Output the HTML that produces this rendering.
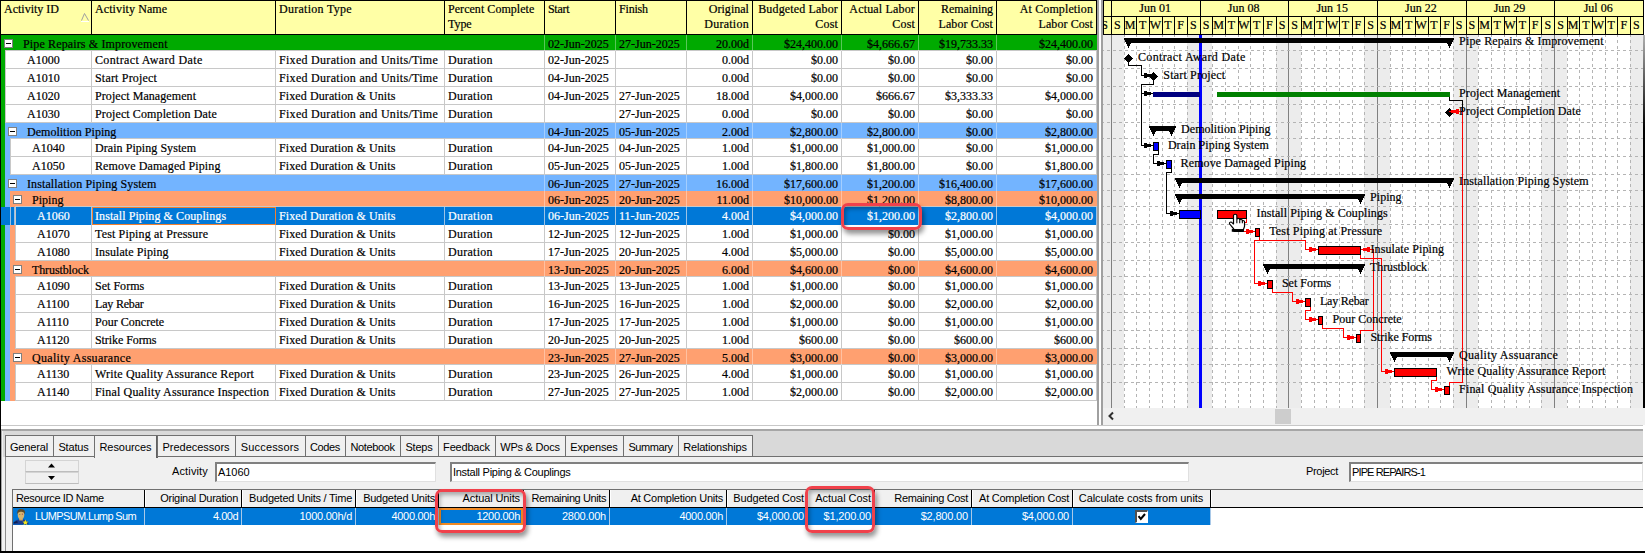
<!DOCTYPE html><html><head><meta charset="utf-8"><title>P6 Activities</title><style>

html,body{margin:0;padding:0;}
body{width:1645px;height:553px;overflow:hidden;background:#fff;position:relative;font-family:"Liberation Serif", serif;font-size:12px;color:#000;}
div,span{box-sizing:border-box;}
.a{position:absolute;}
.t{position:absolute;white-space:nowrap;line-height:14px;height:14px;letter-spacing:0.1px;-webkit-text-stroke:0.2px currentColor;}
svg text{stroke:#000;stroke-width:0.2px;}
.n{letter-spacing:0;}
.r{text-align:right;}
.hd{position:absolute;top:1px;height:33px;background:#ffffa6;border-right:1px solid #000;}
.hd .t{line-height:15px;height:auto;}
.w{color:#fff;}
.s{font-family:"Liberation Sans", sans-serif;font-size:12px;letter-spacing:0;}
.gl{position:absolute;white-space:nowrap;line-height:14px;height:14px;letter-spacing:0.22px;}

</style></head><body>
<div class="a" style="left:0;top:0;width:1097px;height:426px;background:#fff;"></div>
<div class="a" style="left:0;top:0;width:1097px;height:35px;background:#000;"></div>
<div class="a" style="left:1px;top:1px;width:90px;height:33px;background:#ffffa6;"></div>
<div class="t" style="left:4px;top:2px;line-height:15px;height:auto;"><span style="letter-spacing:0.0px;">Activity ID</span></div>
<div class="a" style="left:92px;top:1px;width:183px;height:33px;background:#ffffa6;"></div>
<div class="t" style="left:95px;top:2px;line-height:15px;height:auto;"><span style="letter-spacing:0.093px;">Activity Name</span></div>
<div class="a" style="left:276px;top:1px;width:168px;height:33px;background:#ffffa6;"></div>
<div class="t" style="left:279px;top:2px;line-height:15px;height:auto;"><span style="letter-spacing:0.278px;">Duration Type</span></div>
<div class="a" style="left:445px;top:1px;width:99px;height:33px;background:#ffffa6;"></div>
<div class="t" style="left:448px;top:2px;line-height:15px;height:auto;"><span style="letter-spacing:0.044px;">Percent Complete</span><br><span style="letter-spacing:-0.043px;">Type</span></div>
<div class="a" style="left:545px;top:1px;width:70px;height:33px;background:#ffffa6;"></div>
<div class="t" style="left:548px;top:2px;line-height:15px;height:auto;"><span style="letter-spacing:-0.3px;">Start</span></div>
<div class="a" style="left:616px;top:1px;width:70px;height:33px;background:#ffffa6;"></div>
<div class="t" style="left:619px;top:2px;line-height:15px;height:auto;"><span style="letter-spacing:-0.183px;">Finish</span></div>
<div class="a" style="left:687px;top:1px;width:65px;height:33px;background:#ffffa6;"></div>
<div class="t r" style="left:687px;width:62px;top:2px;line-height:15px;height:auto;"><span style="letter-spacing:0.029px;">Original</span><br><span style="letter-spacing:0.263px;">Duration</span></div>
<div class="a" style="left:753px;top:1px;width:88px;height:33px;background:#ffffa6;"></div>
<div class="t r" style="left:753px;width:85px;top:2px;line-height:15px;height:auto;"><span style="letter-spacing:0.157px;">Budgeted Labor</span><br><span style="letter-spacing:0.161px;">Cost</span></div>
<div class="a" style="left:842px;top:1px;width:76px;height:33px;background:#ffffa6;"></div>
<div class="t r" style="left:842px;width:73px;top:2px;line-height:15px;height:auto;"><span style="letter-spacing:0.169px;">Actual Labor</span><br><span style="letter-spacing:0.161px;">Cost</span></div>
<div class="a" style="left:919px;top:1px;width:77px;height:33px;background:#ffffa6;"></div>
<div class="t r" style="left:919px;width:74px;top:2px;line-height:15px;height:auto;"><span style="letter-spacing:-0.084px;">Remaining</span><br><span style="letter-spacing:0.081px;">Labor Cost</span></div>
<div class="a" style="left:997px;top:1px;width:99px;height:33px;background:#ffffa6;"></div>
<div class="t r" style="left:997px;width:96px;top:2px;line-height:15px;height:auto;"><span style="letter-spacing:0.119px;">At Completion</span><br><span style="letter-spacing:0.081px;">Labor Cost</span></div>
<svg class="a" style="left:80px;top:11px" width="10" height="11"><path d="M1.5 9.5 L4.5 2.5 L8.5 9.5" fill="none" stroke="#a0a0a0" stroke-width="1"/><path d="M1 10.5 H9" stroke="#fff" stroke-width="1"/></svg>
<div class="a" style="left:1px;top:35px;width:1096px;height:16px;background:#00aa00;"></div>
<div class="a" style="left:5px;top:50px;width:1092px;height:1px;background:#c8c8c8;"></div>
<div class="a" style="left:4px;top:39px;width:9px;height:9px;background:#fff;border:1px solid #808080;"></div>
<div class="a" style="left:6px;top:43px;width:5px;height:1px;background:#000;"></div>
<div class="t" style="left:23px;top:37px;letter-spacing:0.141px;">Pipe Repairs &amp; Improvement</div>
<div class="a" style="left:544px;top:35px;width:1px;height:16px;background:rgba(255,255,255,0.35);"></div>
<div class="a" style="left:615px;top:35px;width:1px;height:16px;background:rgba(255,255,255,0.35);"></div>
<div class="a" style="left:686px;top:35px;width:1px;height:16px;background:rgba(255,255,255,0.35);"></div>
<div class="a" style="left:752px;top:35px;width:1px;height:16px;background:rgba(255,255,255,0.35);"></div>
<div class="a" style="left:841px;top:35px;width:1px;height:16px;background:rgba(255,255,255,0.35);"></div>
<div class="a" style="left:918px;top:35px;width:1px;height:16px;background:rgba(255,255,255,0.35);"></div>
<div class="a" style="left:996px;top:35px;width:1px;height:16px;background:rgba(255,255,255,0.35);"></div>
<div class="t n" style="left:548px;top:37px;">02-Jun-2025</div>
<div class="t n" style="left:619px;top:37px;">27-Jun-2025</div>
<div class="t n r" style="left:687px;width:62px;top:37px;">20.00d</div>
<div class="t n r" style="left:753px;width:85px;top:37px;">$24,400.00</div>
<div class="t n r" style="left:842px;width:73px;top:37px;">$4,666.67</div>
<div class="t n r" style="left:919px;width:74px;top:37px;">$19,733.33</div>
<div class="t n r" style="left:997px;width:96px;top:37px;">$24,400.00</div>
<div class="a" style="left:1px;top:51px;width:4px;height:18px;background:#00aa00;"></div>
<div class="a" style="left:5px;top:51px;width:1092px;height:18px;background:#fff;border-bottom:1px solid #c8c8c8;"></div>
<div class="a" style="left:91px;top:51px;width:1px;height:18px;background:#c8c8c8;"></div>
<div class="a" style="left:275px;top:51px;width:1px;height:18px;background:#c8c8c8;"></div>
<div class="a" style="left:444px;top:51px;width:1px;height:18px;background:#c8c8c8;"></div>
<div class="a" style="left:544px;top:51px;width:1px;height:18px;background:#c8c8c8;"></div>
<div class="a" style="left:615px;top:51px;width:1px;height:18px;background:#c8c8c8;"></div>
<div class="a" style="left:686px;top:51px;width:1px;height:18px;background:#c8c8c8;"></div>
<div class="a" style="left:752px;top:51px;width:1px;height:18px;background:#c8c8c8;"></div>
<div class="a" style="left:841px;top:51px;width:1px;height:18px;background:#c8c8c8;"></div>
<div class="a" style="left:918px;top:51px;width:1px;height:18px;background:#c8c8c8;"></div>
<div class="a" style="left:996px;top:51px;width:1px;height:18px;background:#c8c8c8;"></div>
<div class="a" style="left:1096px;top:51px;width:1px;height:18px;background:#c8c8c8;"></div>
<div class="a" style="left:5px;top:51px;width:1px;height:18px;background:#c8c8c8;"></div>
<div class="t n" style="left:27px;top:53px;">A1000</div>
<div class="t" style="left:95px;top:53px;letter-spacing:0.357px;">Contract Award Date</div>
<div class="t" style="left:279px;top:53px;letter-spacing:0.294px;">Fixed Duration and Units/Time</div>
<div class="t" style="left:448px;top:53px;letter-spacing:0.263px;">Duration</div>
<div class="t n" style="left:548px;top:53px;">02-Jun-2025</div>
<div class="t n r" style="left:687px;width:62px;top:53px;">0.00d</div>
<div class="t n r" style="left:753px;width:85px;top:53px;">$0.00</div>
<div class="t n r" style="left:842px;width:73px;top:53px;">$0.00</div>
<div class="t n r" style="left:919px;width:74px;top:53px;">$0.00</div>
<div class="t n r" style="left:997px;width:96px;top:53px;">$0.00</div>
<div class="a" style="left:1px;top:69px;width:4px;height:18px;background:#00aa00;"></div>
<div class="a" style="left:5px;top:69px;width:1092px;height:18px;background:#fff;border-bottom:1px solid #c8c8c8;"></div>
<div class="a" style="left:91px;top:69px;width:1px;height:18px;background:#c8c8c8;"></div>
<div class="a" style="left:275px;top:69px;width:1px;height:18px;background:#c8c8c8;"></div>
<div class="a" style="left:444px;top:69px;width:1px;height:18px;background:#c8c8c8;"></div>
<div class="a" style="left:544px;top:69px;width:1px;height:18px;background:#c8c8c8;"></div>
<div class="a" style="left:615px;top:69px;width:1px;height:18px;background:#c8c8c8;"></div>
<div class="a" style="left:686px;top:69px;width:1px;height:18px;background:#c8c8c8;"></div>
<div class="a" style="left:752px;top:69px;width:1px;height:18px;background:#c8c8c8;"></div>
<div class="a" style="left:841px;top:69px;width:1px;height:18px;background:#c8c8c8;"></div>
<div class="a" style="left:918px;top:69px;width:1px;height:18px;background:#c8c8c8;"></div>
<div class="a" style="left:996px;top:69px;width:1px;height:18px;background:#c8c8c8;"></div>
<div class="a" style="left:1096px;top:69px;width:1px;height:18px;background:#c8c8c8;"></div>
<div class="a" style="left:5px;top:69px;width:1px;height:18px;background:#c8c8c8;"></div>
<div class="t n" style="left:27px;top:71px;">A1010</div>
<div class="t" style="left:95px;top:71px;letter-spacing:0.187px;">Start Project</div>
<div class="t" style="left:279px;top:71px;letter-spacing:0.294px;">Fixed Duration and Units/Time</div>
<div class="t" style="left:448px;top:71px;letter-spacing:0.263px;">Duration</div>
<div class="t n" style="left:548px;top:71px;">04-Jun-2025</div>
<div class="t n r" style="left:687px;width:62px;top:71px;">0.00d</div>
<div class="t n r" style="left:753px;width:85px;top:71px;">$0.00</div>
<div class="t n r" style="left:842px;width:73px;top:71px;">$0.00</div>
<div class="t n r" style="left:919px;width:74px;top:71px;">$0.00</div>
<div class="t n r" style="left:997px;width:96px;top:71px;">$0.00</div>
<div class="a" style="left:1px;top:87px;width:4px;height:18px;background:#00aa00;"></div>
<div class="a" style="left:5px;top:87px;width:1092px;height:18px;background:#fff;border-bottom:1px solid #c8c8c8;"></div>
<div class="a" style="left:91px;top:87px;width:1px;height:18px;background:#c8c8c8;"></div>
<div class="a" style="left:275px;top:87px;width:1px;height:18px;background:#c8c8c8;"></div>
<div class="a" style="left:444px;top:87px;width:1px;height:18px;background:#c8c8c8;"></div>
<div class="a" style="left:544px;top:87px;width:1px;height:18px;background:#c8c8c8;"></div>
<div class="a" style="left:615px;top:87px;width:1px;height:18px;background:#c8c8c8;"></div>
<div class="a" style="left:686px;top:87px;width:1px;height:18px;background:#c8c8c8;"></div>
<div class="a" style="left:752px;top:87px;width:1px;height:18px;background:#c8c8c8;"></div>
<div class="a" style="left:841px;top:87px;width:1px;height:18px;background:#c8c8c8;"></div>
<div class="a" style="left:918px;top:87px;width:1px;height:18px;background:#c8c8c8;"></div>
<div class="a" style="left:996px;top:87px;width:1px;height:18px;background:#c8c8c8;"></div>
<div class="a" style="left:1096px;top:87px;width:1px;height:18px;background:#c8c8c8;"></div>
<div class="a" style="left:5px;top:87px;width:1px;height:18px;background:#c8c8c8;"></div>
<div class="t n" style="left:27px;top:89px;">A1020</div>
<div class="t" style="left:95px;top:89px;letter-spacing:0.08px;">Project Management</div>
<div class="t" style="left:279px;top:89px;letter-spacing:0.099px;">Fixed Duration &amp; Units</div>
<div class="t" style="left:448px;top:89px;letter-spacing:0.263px;">Duration</div>
<div class="t n" style="left:548px;top:89px;">04-Jun-2025</div>
<div class="t n" style="left:619px;top:89px;">27-Jun-2025</div>
<div class="t n r" style="left:687px;width:62px;top:89px;">18.00d</div>
<div class="t n r" style="left:753px;width:85px;top:89px;">$4,000.00</div>
<div class="t n r" style="left:842px;width:73px;top:89px;">$666.67</div>
<div class="t n r" style="left:919px;width:74px;top:89px;">$3,333.33</div>
<div class="t n r" style="left:997px;width:96px;top:89px;">$4,000.00</div>
<div class="a" style="left:1px;top:105px;width:4px;height:18px;background:#00aa00;"></div>
<div class="a" style="left:5px;top:105px;width:1092px;height:18px;background:#fff;border-bottom:1px solid #c8c8c8;"></div>
<div class="a" style="left:91px;top:105px;width:1px;height:18px;background:#c8c8c8;"></div>
<div class="a" style="left:275px;top:105px;width:1px;height:18px;background:#c8c8c8;"></div>
<div class="a" style="left:444px;top:105px;width:1px;height:18px;background:#c8c8c8;"></div>
<div class="a" style="left:544px;top:105px;width:1px;height:18px;background:#c8c8c8;"></div>
<div class="a" style="left:615px;top:105px;width:1px;height:18px;background:#c8c8c8;"></div>
<div class="a" style="left:686px;top:105px;width:1px;height:18px;background:#c8c8c8;"></div>
<div class="a" style="left:752px;top:105px;width:1px;height:18px;background:#c8c8c8;"></div>
<div class="a" style="left:841px;top:105px;width:1px;height:18px;background:#c8c8c8;"></div>
<div class="a" style="left:918px;top:105px;width:1px;height:18px;background:#c8c8c8;"></div>
<div class="a" style="left:996px;top:105px;width:1px;height:18px;background:#c8c8c8;"></div>
<div class="a" style="left:1096px;top:105px;width:1px;height:18px;background:#c8c8c8;"></div>
<div class="a" style="left:5px;top:105px;width:1px;height:18px;background:#c8c8c8;"></div>
<div class="t n" style="left:27px;top:107px;">A1030</div>
<div class="t" style="left:95px;top:107px;letter-spacing:0.109px;">Project Completion Date</div>
<div class="t" style="left:279px;top:107px;letter-spacing:0.294px;">Fixed Duration and Units/Time</div>
<div class="t" style="left:448px;top:107px;letter-spacing:0.263px;">Duration</div>
<div class="t n" style="left:619px;top:107px;">27-Jun-2025</div>
<div class="t n r" style="left:687px;width:62px;top:107px;">0.00d</div>
<div class="t n r" style="left:753px;width:85px;top:107px;">$0.00</div>
<div class="t n r" style="left:842px;width:73px;top:107px;">$0.00</div>
<div class="t n r" style="left:919px;width:74px;top:107px;">$0.00</div>
<div class="t n r" style="left:997px;width:96px;top:107px;">$0.00</div>
<div class="a" style="left:1px;top:123px;width:4px;height:16px;background:#00aa00;"></div>
<div class="a" style="left:5px;top:123px;width:1092px;height:16px;background:#73b4ff;"></div>
<div class="a" style="left:10px;top:138px;width:1087px;height:1px;background:#c8c8c8;"></div>
<div class="a" style="left:8px;top:127px;width:9px;height:9px;background:#fff;border:1px solid #808080;"></div>
<div class="a" style="left:10px;top:131px;width:5px;height:1px;background:#000;"></div>
<div class="t" style="left:27px;top:125px;letter-spacing:0.018px;">Demolition Piping</div>
<div class="a" style="left:544px;top:123px;width:1px;height:16px;background:rgba(255,255,255,0.35);"></div>
<div class="a" style="left:615px;top:123px;width:1px;height:16px;background:rgba(255,255,255,0.35);"></div>
<div class="a" style="left:686px;top:123px;width:1px;height:16px;background:rgba(255,255,255,0.35);"></div>
<div class="a" style="left:752px;top:123px;width:1px;height:16px;background:rgba(255,255,255,0.35);"></div>
<div class="a" style="left:841px;top:123px;width:1px;height:16px;background:rgba(255,255,255,0.35);"></div>
<div class="a" style="left:918px;top:123px;width:1px;height:16px;background:rgba(255,255,255,0.35);"></div>
<div class="a" style="left:996px;top:123px;width:1px;height:16px;background:rgba(255,255,255,0.35);"></div>
<div class="t n" style="left:548px;top:125px;">04-Jun-2025</div>
<div class="t n" style="left:619px;top:125px;">05-Jun-2025</div>
<div class="t n r" style="left:687px;width:62px;top:125px;">2.00d</div>
<div class="t n r" style="left:753px;width:85px;top:125px;">$2,800.00</div>
<div class="t n r" style="left:842px;width:73px;top:125px;">$2,800.00</div>
<div class="t n r" style="left:919px;width:74px;top:125px;">$0.00</div>
<div class="t n r" style="left:997px;width:96px;top:125px;">$2,800.00</div>
<div class="a" style="left:1px;top:139px;width:4px;height:18px;background:#00aa00;"></div>
<div class="a" style="left:5px;top:139px;width:5px;height:18px;background:#73b4ff;"></div>
<div class="a" style="left:10px;top:139px;width:1087px;height:18px;background:#fff;border-bottom:1px solid #c8c8c8;"></div>
<div class="a" style="left:91px;top:139px;width:1px;height:18px;background:#c8c8c8;"></div>
<div class="a" style="left:275px;top:139px;width:1px;height:18px;background:#c8c8c8;"></div>
<div class="a" style="left:444px;top:139px;width:1px;height:18px;background:#c8c8c8;"></div>
<div class="a" style="left:544px;top:139px;width:1px;height:18px;background:#c8c8c8;"></div>
<div class="a" style="left:615px;top:139px;width:1px;height:18px;background:#c8c8c8;"></div>
<div class="a" style="left:686px;top:139px;width:1px;height:18px;background:#c8c8c8;"></div>
<div class="a" style="left:752px;top:139px;width:1px;height:18px;background:#c8c8c8;"></div>
<div class="a" style="left:841px;top:139px;width:1px;height:18px;background:#c8c8c8;"></div>
<div class="a" style="left:918px;top:139px;width:1px;height:18px;background:#c8c8c8;"></div>
<div class="a" style="left:996px;top:139px;width:1px;height:18px;background:#c8c8c8;"></div>
<div class="a" style="left:1096px;top:139px;width:1px;height:18px;background:#c8c8c8;"></div>
<div class="a" style="left:10px;top:139px;width:1px;height:18px;background:#c8c8c8;"></div>
<div class="t n" style="left:32px;top:141px;">A1040</div>
<div class="t" style="left:95px;top:141px;letter-spacing:0.055px;">Drain Piping System</div>
<div class="t" style="left:279px;top:141px;letter-spacing:0.099px;">Fixed Duration &amp; Units</div>
<div class="t" style="left:448px;top:141px;letter-spacing:0.263px;">Duration</div>
<div class="t n" style="left:548px;top:141px;">04-Jun-2025</div>
<div class="t n" style="left:619px;top:141px;">04-Jun-2025</div>
<div class="t n r" style="left:687px;width:62px;top:141px;">1.00d</div>
<div class="t n r" style="left:753px;width:85px;top:141px;">$1,000.00</div>
<div class="t n r" style="left:842px;width:73px;top:141px;">$1,000.00</div>
<div class="t n r" style="left:919px;width:74px;top:141px;">$0.00</div>
<div class="t n r" style="left:997px;width:96px;top:141px;">$1,000.00</div>
<div class="a" style="left:1px;top:157px;width:4px;height:18px;background:#00aa00;"></div>
<div class="a" style="left:5px;top:157px;width:5px;height:18px;background:#73b4ff;"></div>
<div class="a" style="left:10px;top:157px;width:1087px;height:18px;background:#fff;border-bottom:1px solid #c8c8c8;"></div>
<div class="a" style="left:91px;top:157px;width:1px;height:18px;background:#c8c8c8;"></div>
<div class="a" style="left:275px;top:157px;width:1px;height:18px;background:#c8c8c8;"></div>
<div class="a" style="left:444px;top:157px;width:1px;height:18px;background:#c8c8c8;"></div>
<div class="a" style="left:544px;top:157px;width:1px;height:18px;background:#c8c8c8;"></div>
<div class="a" style="left:615px;top:157px;width:1px;height:18px;background:#c8c8c8;"></div>
<div class="a" style="left:686px;top:157px;width:1px;height:18px;background:#c8c8c8;"></div>
<div class="a" style="left:752px;top:157px;width:1px;height:18px;background:#c8c8c8;"></div>
<div class="a" style="left:841px;top:157px;width:1px;height:18px;background:#c8c8c8;"></div>
<div class="a" style="left:918px;top:157px;width:1px;height:18px;background:#c8c8c8;"></div>
<div class="a" style="left:996px;top:157px;width:1px;height:18px;background:#c8c8c8;"></div>
<div class="a" style="left:1096px;top:157px;width:1px;height:18px;background:#c8c8c8;"></div>
<div class="a" style="left:10px;top:157px;width:1px;height:18px;background:#c8c8c8;"></div>
<div class="t n" style="left:32px;top:159px;">A1050</div>
<div class="t" style="left:95px;top:159px;letter-spacing:0.104px;">Remove Damaged Piping</div>
<div class="t" style="left:279px;top:159px;letter-spacing:0.099px;">Fixed Duration &amp; Units</div>
<div class="t" style="left:448px;top:159px;letter-spacing:0.263px;">Duration</div>
<div class="t n" style="left:548px;top:159px;">05-Jun-2025</div>
<div class="t n" style="left:619px;top:159px;">05-Jun-2025</div>
<div class="t n r" style="left:687px;width:62px;top:159px;">1.00d</div>
<div class="t n r" style="left:753px;width:85px;top:159px;">$1,800.00</div>
<div class="t n r" style="left:842px;width:73px;top:159px;">$1,800.00</div>
<div class="t n r" style="left:919px;width:74px;top:159px;">$0.00</div>
<div class="t n r" style="left:997px;width:96px;top:159px;">$1,800.00</div>
<div class="a" style="left:1px;top:175px;width:4px;height:16px;background:#00aa00;"></div>
<div class="a" style="left:5px;top:175px;width:1092px;height:16px;background:#73b4ff;"></div>
<div class="a" style="left:8px;top:179px;width:9px;height:9px;background:#fff;border:1px solid #808080;"></div>
<div class="a" style="left:10px;top:183px;width:5px;height:1px;background:#000;"></div>
<div class="t" style="left:27px;top:177px;letter-spacing:0.109px;">Installation Piping System</div>
<div class="a" style="left:544px;top:175px;width:1px;height:16px;background:rgba(255,255,255,0.35);"></div>
<div class="a" style="left:615px;top:175px;width:1px;height:16px;background:rgba(255,255,255,0.35);"></div>
<div class="a" style="left:686px;top:175px;width:1px;height:16px;background:rgba(255,255,255,0.35);"></div>
<div class="a" style="left:752px;top:175px;width:1px;height:16px;background:rgba(255,255,255,0.35);"></div>
<div class="a" style="left:841px;top:175px;width:1px;height:16px;background:rgba(255,255,255,0.35);"></div>
<div class="a" style="left:918px;top:175px;width:1px;height:16px;background:rgba(255,255,255,0.35);"></div>
<div class="a" style="left:996px;top:175px;width:1px;height:16px;background:rgba(255,255,255,0.35);"></div>
<div class="t n" style="left:548px;top:177px;">06-Jun-2025</div>
<div class="t n" style="left:619px;top:177px;">27-Jun-2025</div>
<div class="t n r" style="left:687px;width:62px;top:177px;">16.00d</div>
<div class="t n r" style="left:753px;width:85px;top:177px;">$17,600.00</div>
<div class="t n r" style="left:842px;width:73px;top:177px;">$1,200.00</div>
<div class="t n r" style="left:919px;width:74px;top:177px;">$16,400.00</div>
<div class="t n r" style="left:997px;width:96px;top:177px;">$17,600.00</div>
<div class="a" style="left:1px;top:191px;width:4px;height:16px;background:#00aa00;"></div>
<div class="a" style="left:5px;top:191px;width:5px;height:16px;background:#73b4ff;"></div>
<div class="a" style="left:10px;top:191px;width:1087px;height:16px;background:#ffa070;"></div>
<div class="a" style="left:15px;top:206px;width:1082px;height:1px;background:#c8c8c8;"></div>
<div class="a" style="left:13px;top:195px;width:9px;height:9px;background:#fff;border:1px solid #808080;"></div>
<div class="a" style="left:15px;top:199px;width:5px;height:1px;background:#000;"></div>
<div class="t" style="left:32px;top:193px;letter-spacing:0.011px;">Piping</div>
<div class="a" style="left:544px;top:191px;width:1px;height:16px;background:rgba(255,255,255,0.35);"></div>
<div class="a" style="left:615px;top:191px;width:1px;height:16px;background:rgba(255,255,255,0.35);"></div>
<div class="a" style="left:686px;top:191px;width:1px;height:16px;background:rgba(255,255,255,0.35);"></div>
<div class="a" style="left:752px;top:191px;width:1px;height:16px;background:rgba(255,255,255,0.35);"></div>
<div class="a" style="left:841px;top:191px;width:1px;height:16px;background:rgba(255,255,255,0.35);"></div>
<div class="a" style="left:918px;top:191px;width:1px;height:16px;background:rgba(255,255,255,0.35);"></div>
<div class="a" style="left:996px;top:191px;width:1px;height:16px;background:rgba(255,255,255,0.35);"></div>
<div class="t n" style="left:548px;top:193px;">06-Jun-2025</div>
<div class="t n" style="left:619px;top:193px;">20-Jun-2025</div>
<div class="t n r" style="left:687px;width:62px;top:193px;">11.00d</div>
<div class="t n r" style="left:753px;width:85px;top:193px;">$10,000.00</div>
<div class="t n r" style="left:842px;width:73px;top:193px;">$1,200.00</div>
<div class="t n r" style="left:919px;width:74px;top:193px;">$8,800.00</div>
<div class="t n r" style="left:997px;width:96px;top:193px;">$10,000.00</div>
<div class="a" style="left:1px;top:207px;width:4px;height:18px;background:#0078d7;"></div>
<div class="a" style="left:5px;top:207px;width:5px;height:18px;background:#0078d7;"></div>
<div class="a" style="left:10px;top:207px;width:5px;height:18px;background:#0078d7;"></div>
<div class="a" style="left:15px;top:207px;width:1082px;height:18px;background:#0078d7;border-bottom:1px solid #0078d7;"></div>
<div class="a" style="left:91px;top:207px;width:1px;height:18px;background:#9cc3e6;"></div>
<div class="a" style="left:275px;top:207px;width:1px;height:18px;background:#9cc3e6;"></div>
<div class="a" style="left:444px;top:207px;width:1px;height:18px;background:#9cc3e6;"></div>
<div class="a" style="left:544px;top:207px;width:1px;height:18px;background:#9cc3e6;"></div>
<div class="a" style="left:615px;top:207px;width:1px;height:18px;background:#9cc3e6;"></div>
<div class="a" style="left:686px;top:207px;width:1px;height:18px;background:#9cc3e6;"></div>
<div class="a" style="left:752px;top:207px;width:1px;height:18px;background:#9cc3e6;"></div>
<div class="a" style="left:841px;top:207px;width:1px;height:18px;background:#9cc3e6;"></div>
<div class="a" style="left:918px;top:207px;width:1px;height:18px;background:#9cc3e6;"></div>
<div class="a" style="left:996px;top:207px;width:1px;height:18px;background:#9cc3e6;"></div>
<div class="a" style="left:1096px;top:207px;width:1px;height:18px;background:#9cc3e6;"></div>
<div class="a" style="left:15px;top:207px;width:1px;height:18px;background:#c8c8c8;"></div>
<div class="t w n" style="left:37px;top:209px;">A1060</div>
<div class="t w" style="left:95px;top:209px;letter-spacing:0.083px;">Install Piping &amp; Couplings</div>
<div class="t w" style="left:279px;top:209px;letter-spacing:0.099px;">Fixed Duration &amp; Units</div>
<div class="t w" style="left:448px;top:209px;letter-spacing:0.263px;">Duration</div>
<div class="t w n" style="left:548px;top:209px;">06-Jun-2025</div>
<div class="t w n" style="left:619px;top:209px;">11-Jun-2025</div>
<div class="t w n r" style="left:687px;width:62px;top:209px;">4.00d</div>
<div class="t w n r" style="left:753px;width:85px;top:209px;">$4,000.00</div>
<div class="t w n r" style="left:842px;width:73px;top:209px;">$1,200.00</div>
<div class="t w n r" style="left:919px;width:74px;top:209px;">$2,800.00</div>
<div class="t w n r" style="left:997px;width:96px;top:209px;">$4,000.00</div>
<div class="a" style="left:10px;top:207px;width:1px;height:18px;background:#9cc3e6;"></div>
<div class="a" style="left:14px;top:207px;width:1px;height:18px;background:#9cc3e6;"></div>
<div class="a" style="left:92px;top:207px;width:184px;height:18px;border:1px solid #f08030;"></div>
<div class="a" style="left:1px;top:225px;width:4px;height:18px;background:#00aa00;"></div>
<div class="a" style="left:5px;top:225px;width:5px;height:18px;background:#73b4ff;"></div>
<div class="a" style="left:10px;top:225px;width:5px;height:18px;background:#ffa070;"></div>
<div class="a" style="left:15px;top:225px;width:1082px;height:18px;background:#fff;border-bottom:1px solid #c8c8c8;"></div>
<div class="a" style="left:91px;top:225px;width:1px;height:18px;background:#c8c8c8;"></div>
<div class="a" style="left:275px;top:225px;width:1px;height:18px;background:#c8c8c8;"></div>
<div class="a" style="left:444px;top:225px;width:1px;height:18px;background:#c8c8c8;"></div>
<div class="a" style="left:544px;top:225px;width:1px;height:18px;background:#c8c8c8;"></div>
<div class="a" style="left:615px;top:225px;width:1px;height:18px;background:#c8c8c8;"></div>
<div class="a" style="left:686px;top:225px;width:1px;height:18px;background:#c8c8c8;"></div>
<div class="a" style="left:752px;top:225px;width:1px;height:18px;background:#c8c8c8;"></div>
<div class="a" style="left:841px;top:225px;width:1px;height:18px;background:#c8c8c8;"></div>
<div class="a" style="left:918px;top:225px;width:1px;height:18px;background:#c8c8c8;"></div>
<div class="a" style="left:996px;top:225px;width:1px;height:18px;background:#c8c8c8;"></div>
<div class="a" style="left:1096px;top:225px;width:1px;height:18px;background:#c8c8c8;"></div>
<div class="a" style="left:15px;top:225px;width:1px;height:18px;background:#c8c8c8;"></div>
<div class="t n" style="left:37px;top:227px;">A1070</div>
<div class="t" style="left:95px;top:227px;letter-spacing:0.16px;">Test Piping at Pressure</div>
<div class="t" style="left:279px;top:227px;letter-spacing:0.099px;">Fixed Duration &amp; Units</div>
<div class="t" style="left:448px;top:227px;letter-spacing:0.263px;">Duration</div>
<div class="t n" style="left:548px;top:227px;">12-Jun-2025</div>
<div class="t n" style="left:619px;top:227px;">12-Jun-2025</div>
<div class="t n r" style="left:687px;width:62px;top:227px;">1.00d</div>
<div class="t n r" style="left:753px;width:85px;top:227px;">$1,000.00</div>
<div class="t n r" style="left:842px;width:73px;top:227px;">$0.00</div>
<div class="t n r" style="left:919px;width:74px;top:227px;">$1,000.00</div>
<div class="t n r" style="left:997px;width:96px;top:227px;">$1,000.00</div>
<div class="a" style="left:1px;top:243px;width:4px;height:18px;background:#00aa00;"></div>
<div class="a" style="left:5px;top:243px;width:5px;height:18px;background:#73b4ff;"></div>
<div class="a" style="left:10px;top:243px;width:5px;height:18px;background:#ffa070;"></div>
<div class="a" style="left:15px;top:243px;width:1082px;height:18px;background:#fff;border-bottom:1px solid #c8c8c8;"></div>
<div class="a" style="left:91px;top:243px;width:1px;height:18px;background:#c8c8c8;"></div>
<div class="a" style="left:275px;top:243px;width:1px;height:18px;background:#c8c8c8;"></div>
<div class="a" style="left:444px;top:243px;width:1px;height:18px;background:#c8c8c8;"></div>
<div class="a" style="left:544px;top:243px;width:1px;height:18px;background:#c8c8c8;"></div>
<div class="a" style="left:615px;top:243px;width:1px;height:18px;background:#c8c8c8;"></div>
<div class="a" style="left:686px;top:243px;width:1px;height:18px;background:#c8c8c8;"></div>
<div class="a" style="left:752px;top:243px;width:1px;height:18px;background:#c8c8c8;"></div>
<div class="a" style="left:841px;top:243px;width:1px;height:18px;background:#c8c8c8;"></div>
<div class="a" style="left:918px;top:243px;width:1px;height:18px;background:#c8c8c8;"></div>
<div class="a" style="left:996px;top:243px;width:1px;height:18px;background:#c8c8c8;"></div>
<div class="a" style="left:1096px;top:243px;width:1px;height:18px;background:#c8c8c8;"></div>
<div class="a" style="left:15px;top:243px;width:1px;height:18px;background:#c8c8c8;"></div>
<div class="t n" style="left:37px;top:245px;">A1080</div>
<div class="t" style="left:95px;top:245px;letter-spacing:0.091px;">Insulate Piping</div>
<div class="t" style="left:279px;top:245px;letter-spacing:0.099px;">Fixed Duration &amp; Units</div>
<div class="t" style="left:448px;top:245px;letter-spacing:0.263px;">Duration</div>
<div class="t n" style="left:548px;top:245px;">17-Jun-2025</div>
<div class="t n" style="left:619px;top:245px;">20-Jun-2025</div>
<div class="t n r" style="left:687px;width:62px;top:245px;">4.00d</div>
<div class="t n r" style="left:753px;width:85px;top:245px;">$5,000.00</div>
<div class="t n r" style="left:842px;width:73px;top:245px;">$0.00</div>
<div class="t n r" style="left:919px;width:74px;top:245px;">$5,000.00</div>
<div class="t n r" style="left:997px;width:96px;top:245px;">$5,000.00</div>
<div class="a" style="left:1px;top:261px;width:4px;height:16px;background:#00aa00;"></div>
<div class="a" style="left:5px;top:261px;width:5px;height:16px;background:#73b4ff;"></div>
<div class="a" style="left:10px;top:261px;width:1087px;height:16px;background:#ffa070;"></div>
<div class="a" style="left:15px;top:276px;width:1082px;height:1px;background:#c8c8c8;"></div>
<div class="a" style="left:13px;top:265px;width:9px;height:9px;background:#fff;border:1px solid #808080;"></div>
<div class="a" style="left:15px;top:269px;width:5px;height:1px;background:#000;"></div>
<div class="t" style="left:32px;top:263px;letter-spacing:-0.11px;">Thrustblock</div>
<div class="a" style="left:544px;top:261px;width:1px;height:16px;background:rgba(255,255,255,0.35);"></div>
<div class="a" style="left:615px;top:261px;width:1px;height:16px;background:rgba(255,255,255,0.35);"></div>
<div class="a" style="left:686px;top:261px;width:1px;height:16px;background:rgba(255,255,255,0.35);"></div>
<div class="a" style="left:752px;top:261px;width:1px;height:16px;background:rgba(255,255,255,0.35);"></div>
<div class="a" style="left:841px;top:261px;width:1px;height:16px;background:rgba(255,255,255,0.35);"></div>
<div class="a" style="left:918px;top:261px;width:1px;height:16px;background:rgba(255,255,255,0.35);"></div>
<div class="a" style="left:996px;top:261px;width:1px;height:16px;background:rgba(255,255,255,0.35);"></div>
<div class="t n" style="left:548px;top:263px;">13-Jun-2025</div>
<div class="t n" style="left:619px;top:263px;">20-Jun-2025</div>
<div class="t n r" style="left:687px;width:62px;top:263px;">6.00d</div>
<div class="t n r" style="left:753px;width:85px;top:263px;">$4,600.00</div>
<div class="t n r" style="left:842px;width:73px;top:263px;">$0.00</div>
<div class="t n r" style="left:919px;width:74px;top:263px;">$4,600.00</div>
<div class="t n r" style="left:997px;width:96px;top:263px;">$4,600.00</div>
<div class="a" style="left:1px;top:277px;width:4px;height:18px;background:#00aa00;"></div>
<div class="a" style="left:5px;top:277px;width:5px;height:18px;background:#73b4ff;"></div>
<div class="a" style="left:10px;top:277px;width:5px;height:18px;background:#ffa070;"></div>
<div class="a" style="left:15px;top:277px;width:1082px;height:18px;background:#fff;border-bottom:1px solid #c8c8c8;"></div>
<div class="a" style="left:91px;top:277px;width:1px;height:18px;background:#c8c8c8;"></div>
<div class="a" style="left:275px;top:277px;width:1px;height:18px;background:#c8c8c8;"></div>
<div class="a" style="left:444px;top:277px;width:1px;height:18px;background:#c8c8c8;"></div>
<div class="a" style="left:544px;top:277px;width:1px;height:18px;background:#c8c8c8;"></div>
<div class="a" style="left:615px;top:277px;width:1px;height:18px;background:#c8c8c8;"></div>
<div class="a" style="left:686px;top:277px;width:1px;height:18px;background:#c8c8c8;"></div>
<div class="a" style="left:752px;top:277px;width:1px;height:18px;background:#c8c8c8;"></div>
<div class="a" style="left:841px;top:277px;width:1px;height:18px;background:#c8c8c8;"></div>
<div class="a" style="left:918px;top:277px;width:1px;height:18px;background:#c8c8c8;"></div>
<div class="a" style="left:996px;top:277px;width:1px;height:18px;background:#c8c8c8;"></div>
<div class="a" style="left:1096px;top:277px;width:1px;height:18px;background:#c8c8c8;"></div>
<div class="a" style="left:15px;top:277px;width:1px;height:18px;background:#c8c8c8;"></div>
<div class="t n" style="left:37px;top:279px;">A1090</div>
<div class="t" style="left:95px;top:279px;letter-spacing:0.023px;">Set Forms</div>
<div class="t" style="left:279px;top:279px;letter-spacing:0.099px;">Fixed Duration &amp; Units</div>
<div class="t" style="left:448px;top:279px;letter-spacing:0.263px;">Duration</div>
<div class="t n" style="left:548px;top:279px;">13-Jun-2025</div>
<div class="t n" style="left:619px;top:279px;">13-Jun-2025</div>
<div class="t n r" style="left:687px;width:62px;top:279px;">1.00d</div>
<div class="t n r" style="left:753px;width:85px;top:279px;">$1,000.00</div>
<div class="t n r" style="left:842px;width:73px;top:279px;">$0.00</div>
<div class="t n r" style="left:919px;width:74px;top:279px;">$1,000.00</div>
<div class="t n r" style="left:997px;width:96px;top:279px;">$1,000.00</div>
<div class="a" style="left:1px;top:295px;width:4px;height:18px;background:#00aa00;"></div>
<div class="a" style="left:5px;top:295px;width:5px;height:18px;background:#73b4ff;"></div>
<div class="a" style="left:10px;top:295px;width:5px;height:18px;background:#ffa070;"></div>
<div class="a" style="left:15px;top:295px;width:1082px;height:18px;background:#fff;border-bottom:1px solid #c8c8c8;"></div>
<div class="a" style="left:91px;top:295px;width:1px;height:18px;background:#c8c8c8;"></div>
<div class="a" style="left:275px;top:295px;width:1px;height:18px;background:#c8c8c8;"></div>
<div class="a" style="left:444px;top:295px;width:1px;height:18px;background:#c8c8c8;"></div>
<div class="a" style="left:544px;top:295px;width:1px;height:18px;background:#c8c8c8;"></div>
<div class="a" style="left:615px;top:295px;width:1px;height:18px;background:#c8c8c8;"></div>
<div class="a" style="left:686px;top:295px;width:1px;height:18px;background:#c8c8c8;"></div>
<div class="a" style="left:752px;top:295px;width:1px;height:18px;background:#c8c8c8;"></div>
<div class="a" style="left:841px;top:295px;width:1px;height:18px;background:#c8c8c8;"></div>
<div class="a" style="left:918px;top:295px;width:1px;height:18px;background:#c8c8c8;"></div>
<div class="a" style="left:996px;top:295px;width:1px;height:18px;background:#c8c8c8;"></div>
<div class="a" style="left:1096px;top:295px;width:1px;height:18px;background:#c8c8c8;"></div>
<div class="a" style="left:15px;top:295px;width:1px;height:18px;background:#c8c8c8;"></div>
<div class="t n" style="left:37px;top:297px;">A1100</div>
<div class="t" style="left:95px;top:297px;letter-spacing:-0.189px;">Lay Rebar</div>
<div class="t" style="left:279px;top:297px;letter-spacing:0.099px;">Fixed Duration &amp; Units</div>
<div class="t" style="left:448px;top:297px;letter-spacing:0.263px;">Duration</div>
<div class="t n" style="left:548px;top:297px;">16-Jun-2025</div>
<div class="t n" style="left:619px;top:297px;">16-Jun-2025</div>
<div class="t n r" style="left:687px;width:62px;top:297px;">1.00d</div>
<div class="t n r" style="left:753px;width:85px;top:297px;">$2,000.00</div>
<div class="t n r" style="left:842px;width:73px;top:297px;">$0.00</div>
<div class="t n r" style="left:919px;width:74px;top:297px;">$2,000.00</div>
<div class="t n r" style="left:997px;width:96px;top:297px;">$2,000.00</div>
<div class="a" style="left:1px;top:313px;width:4px;height:18px;background:#00aa00;"></div>
<div class="a" style="left:5px;top:313px;width:5px;height:18px;background:#73b4ff;"></div>
<div class="a" style="left:10px;top:313px;width:5px;height:18px;background:#ffa070;"></div>
<div class="a" style="left:15px;top:313px;width:1082px;height:18px;background:#fff;border-bottom:1px solid #c8c8c8;"></div>
<div class="a" style="left:91px;top:313px;width:1px;height:18px;background:#c8c8c8;"></div>
<div class="a" style="left:275px;top:313px;width:1px;height:18px;background:#c8c8c8;"></div>
<div class="a" style="left:444px;top:313px;width:1px;height:18px;background:#c8c8c8;"></div>
<div class="a" style="left:544px;top:313px;width:1px;height:18px;background:#c8c8c8;"></div>
<div class="a" style="left:615px;top:313px;width:1px;height:18px;background:#c8c8c8;"></div>
<div class="a" style="left:686px;top:313px;width:1px;height:18px;background:#c8c8c8;"></div>
<div class="a" style="left:752px;top:313px;width:1px;height:18px;background:#c8c8c8;"></div>
<div class="a" style="left:841px;top:313px;width:1px;height:18px;background:#c8c8c8;"></div>
<div class="a" style="left:918px;top:313px;width:1px;height:18px;background:#c8c8c8;"></div>
<div class="a" style="left:996px;top:313px;width:1px;height:18px;background:#c8c8c8;"></div>
<div class="a" style="left:1096px;top:313px;width:1px;height:18px;background:#c8c8c8;"></div>
<div class="a" style="left:15px;top:313px;width:1px;height:18px;background:#c8c8c8;"></div>
<div class="t n" style="left:37px;top:315px;">A1110</div>
<div class="t" style="left:95px;top:315px;letter-spacing:0.018px;">Pour Concrete</div>
<div class="t" style="left:279px;top:315px;letter-spacing:0.099px;">Fixed Duration &amp; Units</div>
<div class="t" style="left:448px;top:315px;letter-spacing:0.263px;">Duration</div>
<div class="t n" style="left:548px;top:315px;">17-Jun-2025</div>
<div class="t n" style="left:619px;top:315px;">17-Jun-2025</div>
<div class="t n r" style="left:687px;width:62px;top:315px;">1.00d</div>
<div class="t n r" style="left:753px;width:85px;top:315px;">$1,000.00</div>
<div class="t n r" style="left:842px;width:73px;top:315px;">$0.00</div>
<div class="t n r" style="left:919px;width:74px;top:315px;">$1,000.00</div>
<div class="t n r" style="left:997px;width:96px;top:315px;">$1,000.00</div>
<div class="a" style="left:1px;top:331px;width:4px;height:18px;background:#00aa00;"></div>
<div class="a" style="left:5px;top:331px;width:5px;height:18px;background:#73b4ff;"></div>
<div class="a" style="left:10px;top:331px;width:5px;height:18px;background:#ffa070;"></div>
<div class="a" style="left:15px;top:331px;width:1082px;height:18px;background:#fff;border-bottom:1px solid #c8c8c8;"></div>
<div class="a" style="left:91px;top:331px;width:1px;height:18px;background:#c8c8c8;"></div>
<div class="a" style="left:275px;top:331px;width:1px;height:18px;background:#c8c8c8;"></div>
<div class="a" style="left:444px;top:331px;width:1px;height:18px;background:#c8c8c8;"></div>
<div class="a" style="left:544px;top:331px;width:1px;height:18px;background:#c8c8c8;"></div>
<div class="a" style="left:615px;top:331px;width:1px;height:18px;background:#c8c8c8;"></div>
<div class="a" style="left:686px;top:331px;width:1px;height:18px;background:#c8c8c8;"></div>
<div class="a" style="left:752px;top:331px;width:1px;height:18px;background:#c8c8c8;"></div>
<div class="a" style="left:841px;top:331px;width:1px;height:18px;background:#c8c8c8;"></div>
<div class="a" style="left:918px;top:331px;width:1px;height:18px;background:#c8c8c8;"></div>
<div class="a" style="left:996px;top:331px;width:1px;height:18px;background:#c8c8c8;"></div>
<div class="a" style="left:1096px;top:331px;width:1px;height:18px;background:#c8c8c8;"></div>
<div class="a" style="left:15px;top:331px;width:1px;height:18px;background:#c8c8c8;"></div>
<div class="t n" style="left:37px;top:333px;">A1120</div>
<div class="t" style="left:95px;top:333px;letter-spacing:-0.077px;">Strike Forms</div>
<div class="t" style="left:279px;top:333px;letter-spacing:0.099px;">Fixed Duration &amp; Units</div>
<div class="t" style="left:448px;top:333px;letter-spacing:0.263px;">Duration</div>
<div class="t n" style="left:548px;top:333px;">20-Jun-2025</div>
<div class="t n" style="left:619px;top:333px;">20-Jun-2025</div>
<div class="t n r" style="left:687px;width:62px;top:333px;">1.00d</div>
<div class="t n r" style="left:753px;width:85px;top:333px;">$600.00</div>
<div class="t n r" style="left:842px;width:73px;top:333px;">$0.00</div>
<div class="t n r" style="left:919px;width:74px;top:333px;">$600.00</div>
<div class="t n r" style="left:997px;width:96px;top:333px;">$600.00</div>
<div class="a" style="left:1px;top:349px;width:4px;height:16px;background:#00aa00;"></div>
<div class="a" style="left:5px;top:349px;width:5px;height:16px;background:#73b4ff;"></div>
<div class="a" style="left:10px;top:349px;width:1087px;height:16px;background:#ffa070;"></div>
<div class="a" style="left:15px;top:364px;width:1082px;height:1px;background:#c8c8c8;"></div>
<div class="a" style="left:13px;top:353px;width:9px;height:9px;background:#fff;border:1px solid #808080;"></div>
<div class="a" style="left:15px;top:357px;width:5px;height:1px;background:#000;"></div>
<div class="t" style="left:32px;top:351px;letter-spacing:0.298px;">Quality Assuarance</div>
<div class="a" style="left:544px;top:349px;width:1px;height:16px;background:rgba(255,255,255,0.35);"></div>
<div class="a" style="left:615px;top:349px;width:1px;height:16px;background:rgba(255,255,255,0.35);"></div>
<div class="a" style="left:686px;top:349px;width:1px;height:16px;background:rgba(255,255,255,0.35);"></div>
<div class="a" style="left:752px;top:349px;width:1px;height:16px;background:rgba(255,255,255,0.35);"></div>
<div class="a" style="left:841px;top:349px;width:1px;height:16px;background:rgba(255,255,255,0.35);"></div>
<div class="a" style="left:918px;top:349px;width:1px;height:16px;background:rgba(255,255,255,0.35);"></div>
<div class="a" style="left:996px;top:349px;width:1px;height:16px;background:rgba(255,255,255,0.35);"></div>
<div class="t n" style="left:548px;top:351px;">23-Jun-2025</div>
<div class="t n" style="left:619px;top:351px;">27-Jun-2025</div>
<div class="t n r" style="left:687px;width:62px;top:351px;">5.00d</div>
<div class="t n r" style="left:753px;width:85px;top:351px;">$3,000.00</div>
<div class="t n r" style="left:842px;width:73px;top:351px;">$0.00</div>
<div class="t n r" style="left:919px;width:74px;top:351px;">$3,000.00</div>
<div class="t n r" style="left:997px;width:96px;top:351px;">$3,000.00</div>
<div class="a" style="left:1px;top:365px;width:4px;height:18px;background:#00aa00;"></div>
<div class="a" style="left:5px;top:365px;width:5px;height:18px;background:#73b4ff;"></div>
<div class="a" style="left:10px;top:365px;width:5px;height:18px;background:#ffa070;"></div>
<div class="a" style="left:15px;top:365px;width:1082px;height:18px;background:#fff;border-bottom:1px solid #c8c8c8;"></div>
<div class="a" style="left:91px;top:365px;width:1px;height:18px;background:#c8c8c8;"></div>
<div class="a" style="left:275px;top:365px;width:1px;height:18px;background:#c8c8c8;"></div>
<div class="a" style="left:444px;top:365px;width:1px;height:18px;background:#c8c8c8;"></div>
<div class="a" style="left:544px;top:365px;width:1px;height:18px;background:#c8c8c8;"></div>
<div class="a" style="left:615px;top:365px;width:1px;height:18px;background:#c8c8c8;"></div>
<div class="a" style="left:686px;top:365px;width:1px;height:18px;background:#c8c8c8;"></div>
<div class="a" style="left:752px;top:365px;width:1px;height:18px;background:#c8c8c8;"></div>
<div class="a" style="left:841px;top:365px;width:1px;height:18px;background:#c8c8c8;"></div>
<div class="a" style="left:918px;top:365px;width:1px;height:18px;background:#c8c8c8;"></div>
<div class="a" style="left:996px;top:365px;width:1px;height:18px;background:#c8c8c8;"></div>
<div class="a" style="left:1096px;top:365px;width:1px;height:18px;background:#c8c8c8;"></div>
<div class="a" style="left:15px;top:365px;width:1px;height:18px;background:#c8c8c8;"></div>
<div class="t n" style="left:37px;top:367px;">A1130</div>
<div class="t" style="left:95px;top:367px;letter-spacing:0.175px;">Write Quality Assurance Report</div>
<div class="t" style="left:279px;top:367px;letter-spacing:0.099px;">Fixed Duration &amp; Units</div>
<div class="t" style="left:448px;top:367px;letter-spacing:0.263px;">Duration</div>
<div class="t n" style="left:548px;top:367px;">23-Jun-2025</div>
<div class="t n" style="left:619px;top:367px;">26-Jun-2025</div>
<div class="t n r" style="left:687px;width:62px;top:367px;">4.00d</div>
<div class="t n r" style="left:753px;width:85px;top:367px;">$1,000.00</div>
<div class="t n r" style="left:842px;width:73px;top:367px;">$0.00</div>
<div class="t n r" style="left:919px;width:74px;top:367px;">$1,000.00</div>
<div class="t n r" style="left:997px;width:96px;top:367px;">$1,000.00</div>
<div class="a" style="left:1px;top:383px;width:4px;height:18px;background:#00aa00;"></div>
<div class="a" style="left:5px;top:383px;width:5px;height:18px;background:#73b4ff;"></div>
<div class="a" style="left:10px;top:383px;width:5px;height:18px;background:#ffa070;"></div>
<div class="a" style="left:15px;top:383px;width:1082px;height:18px;background:#fff;border-bottom:1px solid #c8c8c8;"></div>
<div class="a" style="left:91px;top:383px;width:1px;height:18px;background:#c8c8c8;"></div>
<div class="a" style="left:275px;top:383px;width:1px;height:18px;background:#c8c8c8;"></div>
<div class="a" style="left:444px;top:383px;width:1px;height:18px;background:#c8c8c8;"></div>
<div class="a" style="left:544px;top:383px;width:1px;height:18px;background:#c8c8c8;"></div>
<div class="a" style="left:615px;top:383px;width:1px;height:18px;background:#c8c8c8;"></div>
<div class="a" style="left:686px;top:383px;width:1px;height:18px;background:#c8c8c8;"></div>
<div class="a" style="left:752px;top:383px;width:1px;height:18px;background:#c8c8c8;"></div>
<div class="a" style="left:841px;top:383px;width:1px;height:18px;background:#c8c8c8;"></div>
<div class="a" style="left:918px;top:383px;width:1px;height:18px;background:#c8c8c8;"></div>
<div class="a" style="left:996px;top:383px;width:1px;height:18px;background:#c8c8c8;"></div>
<div class="a" style="left:1096px;top:383px;width:1px;height:18px;background:#c8c8c8;"></div>
<div class="a" style="left:15px;top:383px;width:1px;height:18px;background:#c8c8c8;"></div>
<div class="t n" style="left:37px;top:385px;">A1140</div>
<div class="t" style="left:95px;top:385px;letter-spacing:0.149px;">Final Quality Assurance Inspection</div>
<div class="t" style="left:279px;top:385px;letter-spacing:0.099px;">Fixed Duration &amp; Units</div>
<div class="t" style="left:448px;top:385px;letter-spacing:0.263px;">Duration</div>
<div class="t n" style="left:548px;top:385px;">27-Jun-2025</div>
<div class="t n" style="left:619px;top:385px;">27-Jun-2025</div>
<div class="t n r" style="left:687px;width:62px;top:385px;">1.00d</div>
<div class="t n r" style="left:753px;width:85px;top:385px;">$2,000.00</div>
<div class="t n r" style="left:842px;width:73px;top:385px;">$0.00</div>
<div class="t n r" style="left:919px;width:74px;top:385px;">$2,000.00</div>
<div class="t n r" style="left:997px;width:96px;top:385px;">$2,000.00</div>
<div class="a" style="left:0;top:0;width:1px;height:426px;background:#000;"></div>
<svg class="a" style="left:0;top:0" width="1645" height="426" viewBox="0 0 1645 426" font-family="Liberation Serif, serif" font-size="12">
<defs><clipPath id="gclip"><rect x="1104" y="0" width="541" height="426"/></clipPath><linearGradient id="redge" x1="0" y1="0" x2="0" y2="1"><stop offset="0" stop-color="#b0b0b0"/><stop offset="0.25" stop-color="#000"/><stop offset="1" stop-color="#000"/></linearGradient></defs>
<g shape-rendering="crispEdges">
<rect x="1097" y="0" width="6" height="426" fill="#f0f0f0"/>
<rect x="1097" y="0" width="2" height="426" fill="#a0a0a0"/>
<rect x="1099" y="0" width="2" height="426" fill="#ffffff"/>
<rect x="1101" y="0" width="2" height="426" fill="#a0a0a0"/>
<rect x="1103" y="35" width="540" height="373" fill="#fff"/>
<rect x="1103" y="35" width="21" height="373" fill="#ececec"/>
<rect x="1187" y="35" width="25" height="373" fill="#ececec"/>
<rect x="1276" y="35" width="25" height="373" fill="#ececec"/>
<rect x="1364" y="35" width="26" height="373" fill="#ececec"/>
<rect x="1453" y="35" width="25" height="373" fill="#ececec"/>
<rect x="1541" y="35" width="26" height="373" fill="#ececec"/>
<rect x="1630" y="35" width="13" height="373" fill="#ececec"/>
<rect x="1111" y="35" width="1" height="373" fill="#808080"/>
<line x1="1124.5" y1="35" x2="1124.5" y2="408" stroke="#b4b4b4" stroke-width="1" stroke-dasharray="3 3" stroke-dashoffset="1"/>
<line x1="1136.5" y1="35" x2="1136.5" y2="408" stroke="#b4b4b4" stroke-width="1" stroke-dasharray="3 3" stroke-dashoffset="1"/>
<line x1="1149.5" y1="35" x2="1149.5" y2="408" stroke="#b4b4b4" stroke-width="1" stroke-dasharray="3 3" stroke-dashoffset="1"/>
<line x1="1162.5" y1="35" x2="1162.5" y2="408" stroke="#b4b4b4" stroke-width="1" stroke-dasharray="3 3" stroke-dashoffset="1"/>
<line x1="1174.5" y1="35" x2="1174.5" y2="408" stroke="#b4b4b4" stroke-width="1" stroke-dasharray="3 3" stroke-dashoffset="1"/>
<line x1="1187.5" y1="35" x2="1187.5" y2="408" stroke="#b4b4b4" stroke-width="1" stroke-dasharray="3 3" stroke-dashoffset="1"/>
<rect x="1200" y="35" width="1" height="373" fill="#808080"/>
<line x1="1212.5" y1="35" x2="1212.5" y2="408" stroke="#b4b4b4" stroke-width="1" stroke-dasharray="3 3" stroke-dashoffset="1"/>
<line x1="1225.5" y1="35" x2="1225.5" y2="408" stroke="#b4b4b4" stroke-width="1" stroke-dasharray="3 3" stroke-dashoffset="1"/>
<line x1="1238.5" y1="35" x2="1238.5" y2="408" stroke="#b4b4b4" stroke-width="1" stroke-dasharray="3 3" stroke-dashoffset="1"/>
<line x1="1250.5" y1="35" x2="1250.5" y2="408" stroke="#b4b4b4" stroke-width="1" stroke-dasharray="3 3" stroke-dashoffset="1"/>
<line x1="1263.5" y1="35" x2="1263.5" y2="408" stroke="#b4b4b4" stroke-width="1" stroke-dasharray="3 3" stroke-dashoffset="1"/>
<line x1="1276.5" y1="35" x2="1276.5" y2="408" stroke="#b4b4b4" stroke-width="1" stroke-dasharray="3 3" stroke-dashoffset="1"/>
<rect x="1288" y="35" width="1" height="373" fill="#808080"/>
<line x1="1301.5" y1="35" x2="1301.5" y2="408" stroke="#b4b4b4" stroke-width="1" stroke-dasharray="3 3" stroke-dashoffset="1"/>
<line x1="1314.5" y1="35" x2="1314.5" y2="408" stroke="#b4b4b4" stroke-width="1" stroke-dasharray="3 3" stroke-dashoffset="1"/>
<line x1="1326.5" y1="35" x2="1326.5" y2="408" stroke="#b4b4b4" stroke-width="1" stroke-dasharray="3 3" stroke-dashoffset="1"/>
<line x1="1339.5" y1="35" x2="1339.5" y2="408" stroke="#b4b4b4" stroke-width="1" stroke-dasharray="3 3" stroke-dashoffset="1"/>
<line x1="1352.5" y1="35" x2="1352.5" y2="408" stroke="#b4b4b4" stroke-width="1" stroke-dasharray="3 3" stroke-dashoffset="1"/>
<line x1="1364.5" y1="35" x2="1364.5" y2="408" stroke="#b4b4b4" stroke-width="1" stroke-dasharray="3 3" stroke-dashoffset="1"/>
<rect x="1377" y="35" width="1" height="373" fill="#808080"/>
<line x1="1390.5" y1="35" x2="1390.5" y2="408" stroke="#b4b4b4" stroke-width="1" stroke-dasharray="3 3" stroke-dashoffset="1"/>
<line x1="1402.5" y1="35" x2="1402.5" y2="408" stroke="#b4b4b4" stroke-width="1" stroke-dasharray="3 3" stroke-dashoffset="1"/>
<line x1="1415.5" y1="35" x2="1415.5" y2="408" stroke="#b4b4b4" stroke-width="1" stroke-dasharray="3 3" stroke-dashoffset="1"/>
<line x1="1428.5" y1="35" x2="1428.5" y2="408" stroke="#b4b4b4" stroke-width="1" stroke-dasharray="3 3" stroke-dashoffset="1"/>
<line x1="1440.5" y1="35" x2="1440.5" y2="408" stroke="#b4b4b4" stroke-width="1" stroke-dasharray="3 3" stroke-dashoffset="1"/>
<line x1="1453.5" y1="35" x2="1453.5" y2="408" stroke="#b4b4b4" stroke-width="1" stroke-dasharray="3 3" stroke-dashoffset="1"/>
<rect x="1466" y="35" width="1" height="373" fill="#808080"/>
<line x1="1478.5" y1="35" x2="1478.5" y2="408" stroke="#b4b4b4" stroke-width="1" stroke-dasharray="3 3" stroke-dashoffset="1"/>
<line x1="1491.5" y1="35" x2="1491.5" y2="408" stroke="#b4b4b4" stroke-width="1" stroke-dasharray="3 3" stroke-dashoffset="1"/>
<line x1="1504.5" y1="35" x2="1504.5" y2="408" stroke="#b4b4b4" stroke-width="1" stroke-dasharray="3 3" stroke-dashoffset="1"/>
<line x1="1516.5" y1="35" x2="1516.5" y2="408" stroke="#b4b4b4" stroke-width="1" stroke-dasharray="3 3" stroke-dashoffset="1"/>
<line x1="1529.5" y1="35" x2="1529.5" y2="408" stroke="#b4b4b4" stroke-width="1" stroke-dasharray="3 3" stroke-dashoffset="1"/>
<line x1="1541.5" y1="35" x2="1541.5" y2="408" stroke="#b4b4b4" stroke-width="1" stroke-dasharray="3 3" stroke-dashoffset="1"/>
<rect x="1554" y="35" width="1" height="373" fill="#808080"/>
<line x1="1567.5" y1="35" x2="1567.5" y2="408" stroke="#b4b4b4" stroke-width="1" stroke-dasharray="3 3" stroke-dashoffset="1"/>
<line x1="1579.5" y1="35" x2="1579.5" y2="408" stroke="#b4b4b4" stroke-width="1" stroke-dasharray="3 3" stroke-dashoffset="1"/>
<line x1="1592.5" y1="35" x2="1592.5" y2="408" stroke="#b4b4b4" stroke-width="1" stroke-dasharray="3 3" stroke-dashoffset="1"/>
<line x1="1605.5" y1="35" x2="1605.5" y2="408" stroke="#b4b4b4" stroke-width="1" stroke-dasharray="3 3" stroke-dashoffset="1"/>
<line x1="1617.5" y1="35" x2="1617.5" y2="408" stroke="#b4b4b4" stroke-width="1" stroke-dasharray="3 3" stroke-dashoffset="1"/>
<line x1="1630.5" y1="35" x2="1630.5" y2="408" stroke="#b4b4b4" stroke-width="1" stroke-dasharray="3 3" stroke-dashoffset="1"/>
<rect x="1643" y="35" width="1" height="373" fill="#808080"/>
<line x1="1103" y1="50.5" x2="1643" y2="50.5" stroke="#b4b4b4" stroke-width="1" stroke-dasharray="3 3" stroke-dashoffset="2"/>
<line x1="1103" y1="68.5" x2="1643" y2="68.5" stroke="#b4b4b4" stroke-width="1" stroke-dasharray="3 3" stroke-dashoffset="2"/>
<line x1="1103" y1="86.5" x2="1643" y2="86.5" stroke="#b4b4b4" stroke-width="1" stroke-dasharray="3 3" stroke-dashoffset="2"/>
<line x1="1103" y1="104.5" x2="1643" y2="104.5" stroke="#b4b4b4" stroke-width="1" stroke-dasharray="3 3" stroke-dashoffset="2"/>
<line x1="1103" y1="122.5" x2="1643" y2="122.5" stroke="#b4b4b4" stroke-width="1" stroke-dasharray="3 3" stroke-dashoffset="2"/>
<line x1="1103" y1="138.5" x2="1643" y2="138.5" stroke="#b4b4b4" stroke-width="1" stroke-dasharray="3 3" stroke-dashoffset="2"/>
<line x1="1103" y1="156.5" x2="1643" y2="156.5" stroke="#b4b4b4" stroke-width="1" stroke-dasharray="3 3" stroke-dashoffset="2"/>
<line x1="1103" y1="174.5" x2="1643" y2="174.5" stroke="#b4b4b4" stroke-width="1" stroke-dasharray="3 3" stroke-dashoffset="2"/>
<line x1="1103" y1="190.5" x2="1643" y2="190.5" stroke="#b4b4b4" stroke-width="1" stroke-dasharray="3 3" stroke-dashoffset="2"/>
<line x1="1103" y1="206.5" x2="1643" y2="206.5" stroke="#b4b4b4" stroke-width="1" stroke-dasharray="3 3" stroke-dashoffset="2"/>
<line x1="1103" y1="224.5" x2="1643" y2="224.5" stroke="#b4b4b4" stroke-width="1" stroke-dasharray="3 3" stroke-dashoffset="2"/>
<line x1="1103" y1="242.5" x2="1643" y2="242.5" stroke="#b4b4b4" stroke-width="1" stroke-dasharray="3 3" stroke-dashoffset="2"/>
<line x1="1103" y1="260.5" x2="1643" y2="260.5" stroke="#b4b4b4" stroke-width="1" stroke-dasharray="3 3" stroke-dashoffset="2"/>
<line x1="1103" y1="276.5" x2="1643" y2="276.5" stroke="#b4b4b4" stroke-width="1" stroke-dasharray="3 3" stroke-dashoffset="2"/>
<line x1="1103" y1="294.5" x2="1643" y2="294.5" stroke="#b4b4b4" stroke-width="1" stroke-dasharray="3 3" stroke-dashoffset="2"/>
<line x1="1103" y1="312.5" x2="1643" y2="312.5" stroke="#b4b4b4" stroke-width="1" stroke-dasharray="3 3" stroke-dashoffset="2"/>
<line x1="1103" y1="330.5" x2="1643" y2="330.5" stroke="#b4b4b4" stroke-width="1" stroke-dasharray="3 3" stroke-dashoffset="2"/>
<line x1="1103" y1="348.5" x2="1643" y2="348.5" stroke="#b4b4b4" stroke-width="1" stroke-dasharray="3 3" stroke-dashoffset="2"/>
<line x1="1103" y1="364.5" x2="1643" y2="364.5" stroke="#b4b4b4" stroke-width="1" stroke-dasharray="3 3" stroke-dashoffset="2"/>
<line x1="1103" y1="382.5" x2="1643" y2="382.5" stroke="#b4b4b4" stroke-width="1" stroke-dasharray="3 3" stroke-dashoffset="2"/>
<rect x="1199" y="35" width="3" height="373" fill="#0000ff"/>
<rect x="1103" y="0" width="541" height="35" fill="#000"/>
<rect x="1104" y="1" width="7" height="15" fill="#ffffa6"/>
<rect x="1112" y="1" width="88" height="15" fill="#ffffa6"/>
<rect x="1201" y="1" width="87" height="15" fill="#ffffa6"/>
<rect x="1289" y="1" width="88" height="15" fill="#ffffa6"/>
<rect x="1378" y="1" width="88" height="15" fill="#ffffa6"/>
<rect x="1467" y="1" width="87" height="15" fill="#ffffa6"/>
<rect x="1555" y="1" width="88" height="15" fill="#ffffa6"/>
<rect x="1104" y="17" width="7" height="17" fill="#ffffa6"/>
<rect x="1112" y="17" width="12" height="17" fill="#ffffa6"/>
<rect x="1125" y="17" width="11" height="17" fill="#ffffa6"/>
<rect x="1137" y="17" width="12" height="17" fill="#ffffa6"/>
<rect x="1150" y="17" width="12" height="17" fill="#ffffa6"/>
<rect x="1163" y="17" width="11" height="17" fill="#ffffa6"/>
<rect x="1175" y="17" width="12" height="17" fill="#ffffa6"/>
<rect x="1188" y="17" width="12" height="17" fill="#ffffa6"/>
<rect x="1201" y="17" width="11" height="17" fill="#ffffa6"/>
<rect x="1213" y="17" width="12" height="17" fill="#ffffa6"/>
<rect x="1226" y="17" width="12" height="17" fill="#ffffa6"/>
<rect x="1239" y="17" width="11" height="17" fill="#ffffa6"/>
<rect x="1251" y="17" width="12" height="17" fill="#ffffa6"/>
<rect x="1264" y="17" width="12" height="17" fill="#ffffa6"/>
<rect x="1277" y="17" width="11" height="17" fill="#ffffa6"/>
<rect x="1289" y="17" width="12" height="17" fill="#ffffa6"/>
<rect x="1302" y="17" width="12" height="17" fill="#ffffa6"/>
<rect x="1315" y="17" width="11" height="17" fill="#ffffa6"/>
<rect x="1327" y="17" width="12" height="17" fill="#ffffa6"/>
<rect x="1340" y="17" width="12" height="17" fill="#ffffa6"/>
<rect x="1353" y="17" width="11" height="17" fill="#ffffa6"/>
<rect x="1365" y="17" width="12" height="17" fill="#ffffa6"/>
<rect x="1378" y="17" width="12" height="17" fill="#ffffa6"/>
<rect x="1391" y="17" width="11" height="17" fill="#ffffa6"/>
<rect x="1403" y="17" width="12" height="17" fill="#ffffa6"/>
<rect x="1416" y="17" width="12" height="17" fill="#ffffa6"/>
<rect x="1429" y="17" width="11" height="17" fill="#ffffa6"/>
<rect x="1441" y="17" width="12" height="17" fill="#ffffa6"/>
<rect x="1454" y="17" width="12" height="17" fill="#ffffa6"/>
<rect x="1467" y="17" width="11" height="17" fill="#ffffa6"/>
<rect x="1479" y="17" width="12" height="17" fill="#ffffa6"/>
<rect x="1492" y="17" width="12" height="17" fill="#ffffa6"/>
<rect x="1505" y="17" width="11" height="17" fill="#ffffa6"/>
<rect x="1517" y="17" width="12" height="17" fill="#ffffa6"/>
<rect x="1530" y="17" width="11" height="17" fill="#ffffa6"/>
<rect x="1542" y="17" width="12" height="17" fill="#ffffa6"/>
<rect x="1555" y="17" width="12" height="17" fill="#ffffa6"/>
<rect x="1568" y="17" width="11" height="17" fill="#ffffa6"/>
<rect x="1580" y="17" width="12" height="17" fill="#ffffa6"/>
<rect x="1593" y="17" width="12" height="17" fill="#ffffa6"/>
<rect x="1606" y="17" width="11" height="17" fill="#ffffa6"/>
<rect x="1618" y="17" width="12" height="17" fill="#ffffa6"/>
<rect x="1631" y="17" width="12" height="17" fill="#ffffa6"/>
<path d="M1128.5 59.0 L1128.5 65.5 L1141.5 65.5 L1141.5 75.5 L1149.0 75.5" fill="none" stroke="#000" stroke-width="1" stroke-linecap="square"/>
<rect x="1144" y="73.0" width="3" height="5" fill="#000"/>
<rect x="1147" y="74.0" width="4" height="3" fill="#000"/>
<rect x="1151" y="75.0" width="2" height="1" fill="#000"/>
<path d="M1153.5 77.0 L1153.5 84.5 L1141.5 84.5 L1141.5 145.5 L1150.0 145.5" fill="none" stroke="#000" stroke-width="1" stroke-linecap="square"/>
<path d="M1141.5 93.5 L1150.0 93.5" fill="none" stroke="#000" stroke-width="1" stroke-linecap="square"/>
<rect x="1144" y="91.0" width="3" height="5" fill="#000"/>
<rect x="1147" y="92.0" width="4" height="3" fill="#000"/>
<rect x="1151" y="93.0" width="2" height="1" fill="#000"/>
<rect x="1144" y="143.0" width="3" height="5" fill="#000"/>
<rect x="1147" y="144.0" width="4" height="3" fill="#000"/>
<rect x="1151" y="145.0" width="2" height="1" fill="#000"/>
<path d="M1158.5 151.0 L1158.5 154.5 L1153.5 154.5 L1153.5 163.5 L1163.0 163.5" fill="none" stroke="#000" stroke-width="1" stroke-linecap="square"/>
<rect x="1157" y="161.0" width="3" height="5" fill="#000"/>
<rect x="1160" y="162.0" width="4" height="3" fill="#000"/>
<rect x="1164" y="163.0" width="2" height="1" fill="#000"/>
<path d="M1171.5 169.0 L1171.5 172.5 L1166.5 172.5 L1166.5 213.5 L1176.0 213.5" fill="none" stroke="#000" stroke-width="1" stroke-linecap="square"/>
<rect x="1170" y="211.0" width="3" height="5" fill="#000"/>
<rect x="1173" y="212.0" width="4" height="3" fill="#000"/>
<rect x="1177" y="213.0" width="2" height="1" fill="#000"/>
<path d="M1246.5 219.0 L1246.5 222.5 L1242.5 222.5 L1242.5 231.5 L1252.0 231.5" fill="none" stroke="#ff0000" stroke-width="1" stroke-linecap="square"/>
<rect x="1246" y="229.0" width="3" height="5" fill="#ff0000"/>
<rect x="1249" y="230.0" width="4" height="3" fill="#ff0000"/>
<rect x="1253" y="231.0" width="2" height="1" fill="#ff0000"/>
<path d="M1259.5 237.0 L1259.5 240.5 L1305.5 240.5 L1305.5 249.5 L1315.0 249.5" fill="none" stroke="#ff0000" stroke-width="1" stroke-linecap="square"/>
<rect x="1309" y="247.0" width="3" height="5" fill="#ff0000"/>
<rect x="1312" y="248.0" width="4" height="3" fill="#ff0000"/>
<rect x="1316" y="249.0" width="2" height="1" fill="#ff0000"/>
<path d="M1259.5 240.5 L1254.5 240.5 L1254.5 283.5 L1264.0 283.5" fill="none" stroke="#ff0000" stroke-width="1" stroke-linecap="square"/>
<rect x="1258" y="281.0" width="3" height="5" fill="#ff0000"/>
<rect x="1261" y="282.0" width="4" height="3" fill="#ff0000"/>
<rect x="1265" y="283.0" width="2" height="1" fill="#ff0000"/>
<path d="M1360.5 255.0 L1360.5 258.5 L1381.5 258.5 L1381.5 371.5 L1391.0 371.5" fill="none" stroke="#ff0000" stroke-width="1" stroke-linecap="square"/>
<rect x="1385" y="369.0" width="3" height="5" fill="#ff0000"/>
<rect x="1388" y="370.0" width="4" height="3" fill="#ff0000"/>
<rect x="1392" y="371.0" width="2" height="1" fill="#ff0000"/>
<path d="M1272.5 289.0 L1272.5 292.5 L1292.5 292.5 L1292.5 301.5 L1302.0 301.5" fill="none" stroke="#ff0000" stroke-width="1" stroke-linecap="square"/>
<rect x="1296" y="299.0" width="3" height="5" fill="#ff0000"/>
<rect x="1299" y="300.0" width="4" height="3" fill="#ff0000"/>
<rect x="1303" y="301.0" width="2" height="1" fill="#ff0000"/>
<path d="M1310.5 307.0 L1310.5 310.5 L1305.5 310.5 L1305.5 319.5 L1315.0 319.5" fill="none" stroke="#ff0000" stroke-width="1" stroke-linecap="square"/>
<rect x="1309" y="317.0" width="3" height="5" fill="#ff0000"/>
<rect x="1312" y="318.0" width="4" height="3" fill="#ff0000"/>
<rect x="1316" y="319.0" width="2" height="1" fill="#ff0000"/>
<path d="M1322.5 325.0 L1322.5 328.5 L1343.5 328.5 L1343.5 337.5 L1353.0 337.5" fill="none" stroke="#ff0000" stroke-width="1" stroke-linecap="square"/>
<rect x="1347" y="335.0" width="3" height="5" fill="#ff0000"/>
<rect x="1350" y="336.0" width="4" height="3" fill="#ff0000"/>
<rect x="1354" y="337.0" width="2" height="1" fill="#ff0000"/>
<path d="M1436.5 377.0 L1436.5 380.5 L1431.5 380.5 L1431.5 389.5 L1441.0 389.5" fill="none" stroke="#ff0000" stroke-width="1" stroke-linecap="square"/>
<rect x="1435" y="387.0" width="3" height="5" fill="#ff0000"/>
<rect x="1438" y="388.0" width="4" height="3" fill="#ff0000"/>
<rect x="1442" y="389.0" width="2" height="1" fill="#ff0000"/>
<path d="M1360.5 334.0 L1360.5 330.5 L1373.5 330.5 L1373.5 249.5 L1364.0 249.5" fill="none" stroke="#ff0000" stroke-width="1" stroke-linecap="square"/>
<rect x="1367" y="247.0" width="3" height="5" fill="#ff0000"/>
<rect x="1363" y="248.0" width="4" height="3" fill="#ff0000"/>
<rect x="1361" y="249.0" width="2" height="1" fill="#ff0000"/>
<path d="M1449.5 97.0 L1449.5 100.5 L1462.5 100.5 L1462.5 110.0" fill="none" stroke="#000" stroke-width="1" stroke-linecap="square"/>
<path d="M1449.5 386.0 L1449.5 382.5 L1462.5 382.5 L1462.5 111.5 L1456.0 111.5" fill="none" stroke="#ff0000" stroke-width="1" stroke-linecap="square"/>
<rect x="1128.5" y="38" width="321.0" height="5" fill="#000"/>
<rect x="1153" y="92" width="47" height="5" fill="#000080"/>
<rect x="1217" y="92" width="233" height="5" fill="#008000"/>
<rect x="1153.5" y="126" width="18.0" height="5" fill="#000"/>
<rect x="1153" y="142" width="6" height="9" fill="#000"/>
<rect x="1154" y="143" width="4" height="7" fill="#0000ff"/>
<rect x="1166" y="160" width="6" height="9" fill="#000"/>
<rect x="1167" y="161" width="4" height="7" fill="#0000ff"/>
<rect x="1179.5" y="178" width="270.0" height="5" fill="#000"/>
<rect x="1179.5" y="194" width="181.0" height="5" fill="#000"/>
<rect x="1179" y="210" width="22" height="9" fill="#000"/>
<rect x="1180" y="211" width="20" height="7" fill="#0000ff"/>
<rect x="1217" y="210" width="30" height="9" fill="#000"/>
<rect x="1218" y="211" width="28" height="7" fill="#ff0000"/>
<rect x="1255" y="228" width="5" height="9" fill="#000"/>
<rect x="1256" y="229" width="3" height="7" fill="#ff0000"/>
<rect x="1318" y="246" width="43" height="9" fill="#000"/>
<rect x="1319" y="247" width="41" height="7" fill="#ff0000"/>
<rect x="1267.5" y="264" width="93.0" height="5" fill="#000"/>
<rect x="1267" y="280" width="6" height="9" fill="#000"/>
<rect x="1268" y="281" width="4" height="7" fill="#ff0000"/>
<rect x="1305" y="298" width="6" height="9" fill="#000"/>
<rect x="1306" y="299" width="4" height="7" fill="#ff0000"/>
<rect x="1318" y="316" width="5" height="9" fill="#000"/>
<rect x="1319" y="317" width="3" height="7" fill="#ff0000"/>
<rect x="1356" y="334" width="5" height="9" fill="#000"/>
<rect x="1357" y="335" width="3" height="7" fill="#ff0000"/>
<rect x="1394.5" y="352" width="55.0" height="5" fill="#000"/>
<rect x="1394" y="368" width="43" height="9" fill="#000"/>
<rect x="1395" y="369" width="41" height="7" fill="#ff0000"/>
<rect x="1444" y="386" width="6" height="9" fill="#000"/>
<rect x="1445" y="387" width="4" height="7" fill="#ff0000"/>
<path d="M1123.5 38 H1133.5 L1128.5 47.8 Z" fill="#000"/>
<path d="M1444.5 38 H1454.5 L1449.5 47.8 Z" fill="#000"/>
<path d="M1123.8 58.5 L1128.5 53.8 L1133.2 58.5 L1128.5 63.2 Z" fill="#000"/>
<path d="M1148.8 76.5 L1153.5 71.8 L1158.2 76.5 L1153.5 81.2 Z" fill="#000"/>
<path d="M1444.8 112.5 L1449.5 107.8 L1454.2 112.5 L1449.5 117.2 Z" fill="#000"/>
<rect x="1456" y="109.0" width="3" height="5" fill="#ff0000"/>
<rect x="1451" y="110.0" width="5" height="3" fill="#ff0000"/>
<rect x="1449" y="111.0" width="3" height="1" fill="#ff0000"/>
<path d="M1148.5 126 H1158.5 L1153.5 135.8 Z" fill="#000"/>
<path d="M1166.5 126 H1176.5 L1171.5 135.8 Z" fill="#000"/>
<path d="M1174.5 178 H1184.5 L1179.5 187.8 Z" fill="#000"/>
<path d="M1444.5 178 H1454.5 L1449.5 187.8 Z" fill="#000"/>
<path d="M1174.5 194 H1184.5 L1179.5 203.8 Z" fill="#000"/>
<path d="M1355.5 194 H1365.5 L1360.5 203.8 Z" fill="#000"/>
<path d="M1262.5 264 H1272.5 L1267.5 273.8 Z" fill="#000"/>
<path d="M1355.5 264 H1365.5 L1360.5 273.8 Z" fill="#000"/>
<path d="M1389.5 352 H1399.5 L1394.5 361.8 Z" fill="#000"/>
<path d="M1444.5 352 H1454.5 L1449.5 361.8 Z" fill="#000"/>
<rect x="1643" y="35" width="2" height="373" fill="url(#redge)"/>
<rect x="1103" y="408" width="542" height="17" fill="#f0f0f0"/>
<rect x="1275" y="409" width="16" height="15" fill="#cdcdcd"/>
</g>
<text x="1155.1" y="12" text-anchor="middle">Jun 01</text>
<text x="1243.7" y="12" text-anchor="middle">Jun 08</text>
<text x="1332.3" y="12" text-anchor="middle">Jun 15</text>
<text x="1420.9" y="12" text-anchor="middle">Jun 22</text>
<text x="1509.5" y="12" text-anchor="middle">Jun 29</text>
<text x="1598.2" y="12" text-anchor="middle">Jul 06</text>
<text x="1104.7" y="28.6" text-anchor="middle" clip-path="url(#gclip)">S</text>
<text x="1117.4" y="28.6" text-anchor="middle">S</text>
<text x="1130.0" y="28.6" text-anchor="middle">M</text>
<text x="1142.7" y="28.6" text-anchor="middle">T</text>
<text x="1155.4" y="28.6" text-anchor="middle">W</text>
<text x="1168.0" y="28.6" text-anchor="middle">T</text>
<text x="1180.7" y="28.6" text-anchor="middle">F</text>
<text x="1193.3" y="28.6" text-anchor="middle">S</text>
<text x="1206.0" y="28.6" text-anchor="middle">S</text>
<text x="1218.7" y="28.6" text-anchor="middle">M</text>
<text x="1231.3" y="28.6" text-anchor="middle">T</text>
<text x="1244.0" y="28.6" text-anchor="middle">W</text>
<text x="1256.6" y="28.6" text-anchor="middle">T</text>
<text x="1269.3" y="28.6" text-anchor="middle">F</text>
<text x="1282.0" y="28.6" text-anchor="middle">S</text>
<text x="1294.6" y="28.6" text-anchor="middle">S</text>
<text x="1307.3" y="28.6" text-anchor="middle">M</text>
<text x="1319.9" y="28.6" text-anchor="middle">T</text>
<text x="1332.6" y="28.6" text-anchor="middle">W</text>
<text x="1345.3" y="28.6" text-anchor="middle">T</text>
<text x="1357.9" y="28.6" text-anchor="middle">F</text>
<text x="1370.6" y="28.6" text-anchor="middle">S</text>
<text x="1383.2" y="28.6" text-anchor="middle">S</text>
<text x="1395.9" y="28.6" text-anchor="middle">M</text>
<text x="1408.6" y="28.6" text-anchor="middle">T</text>
<text x="1421.2" y="28.6" text-anchor="middle">W</text>
<text x="1433.9" y="28.6" text-anchor="middle">T</text>
<text x="1446.5" y="28.6" text-anchor="middle">F</text>
<text x="1459.2" y="28.6" text-anchor="middle">S</text>
<text x="1471.9" y="28.6" text-anchor="middle">S</text>
<text x="1484.5" y="28.6" text-anchor="middle">M</text>
<text x="1497.2" y="28.6" text-anchor="middle">T</text>
<text x="1509.8" y="28.6" text-anchor="middle">W</text>
<text x="1522.5" y="28.6" text-anchor="middle">T</text>
<text x="1535.2" y="28.6" text-anchor="middle">F</text>
<text x="1547.8" y="28.6" text-anchor="middle">S</text>
<text x="1560.5" y="28.6" text-anchor="middle">S</text>
<text x="1573.1" y="28.6" text-anchor="middle">M</text>
<text x="1585.8" y="28.6" text-anchor="middle">T</text>
<text x="1598.5" y="28.6" text-anchor="middle">W</text>
<text x="1611.1" y="28.6" text-anchor="middle">T</text>
<text x="1623.8" y="28.6" text-anchor="middle">F</text>
<text x="1636.4" y="28.6" text-anchor="middle">S</text>
<text x="1459.1" y="45" textLength="144.5" lengthAdjust="spacing">Pipe Repairs &amp; Improvement</text>
<text x="1138.0" y="61" textLength="107.3" lengthAdjust="spacing">Contract Award Date</text>
<text x="1163.3" y="79" textLength="61.9" lengthAdjust="spacing">Start Project</text>
<text x="1459.1" y="97" textLength="101.0" lengthAdjust="spacing">Project Management</text>
<text x="1459.1" y="115" textLength="121.7" lengthAdjust="spacing">Project Completion Date</text>
<text x="1181.1" y="133" textLength="89.3" lengthAdjust="spacing">Demolition Piping</text>
<text x="1167.9" y="149" textLength="101.0" lengthAdjust="spacing">Drain Piping System</text>
<text x="1180.6" y="167" textLength="125.4" lengthAdjust="spacing">Remove Damaged Piping</text>
<text x="1459.1" y="185" textLength="129.4" lengthAdjust="spacing">Installation Piping System</text>
<text x="1370.1" y="201" textLength="31.4" lengthAdjust="spacing">Piping</text>
<text x="1256.6" y="217" textLength="131.1" lengthAdjust="spacing">Install Piping &amp; Couplings</text>
<text x="1269.2" y="235" textLength="113.0" lengthAdjust="spacing">Test Piping at Pressure</text>
<text x="1370.5" y="253" textLength="73.6" lengthAdjust="spacing">Insulate Piping</text>
<text x="1370.1" y="271" textLength="56.9" lengthAdjust="spacing">Thrustblock</text>
<text x="1281.9" y="287" textLength="49.2" lengthAdjust="spacing">Set Forms</text>
<text x="1319.9" y="305" textLength="48.8" lengthAdjust="spacing">Lay Rebar</text>
<text x="1332.5" y="323" textLength="69.2" lengthAdjust="spacing">Pour Concrete</text>
<text x="1370.5" y="341" textLength="61.5" lengthAdjust="spacing">Strike Forms</text>
<text x="1459.1" y="359" textLength="98.7" lengthAdjust="spacing">Quality Assuarance</text>
<text x="1446.5" y="375" textLength="158.9" lengthAdjust="spacing">Write Quality Assurance Report</text>
<text x="1459.1" y="393" textLength="173.9" lengthAdjust="spacing">Final Quality Assurance Inspection</text>
<path d="M1113 412.5 L1109.5 416 L1113 419.5" fill="none" stroke="#303030" stroke-width="2"/>
<g transform="translate(1228.7,213.6) scale(0.96,0.83)"><path d="M5,2.2 C5,0.2 8.5,0.2 8.5,2.2 V6.8 C9,5.4 11.5,5.4 11.5,7 V7.8 C12,6.6 14.2,6.8 14.2,8.2 V9 C14.8,8 16.5,8.4 16.5,9.8 V15 C16.5,17 15,18 15,21.5 H5.5 V19 C5,17.5 2.5,15 1,12.6 C0.2,11 1.8,9.6 3,10.4 L5,12.6 Z" fill="#fff" stroke="#000" stroke-width="1.25" stroke-linejoin="round"/><path d="M8.5 7 V11.5 M11.5 8 V11.5 M14.2 9 V11.5" stroke="#000" stroke-width="1.1" fill="none"/><rect x="3.2" y="18.6" width="12.6" height="3.3" fill="#000"/></g>
</svg>
<div class="a" style="left:0;top:425px;width:1645px;height:128px;background:#f0f0f0;"></div>
<div class="a" style="left:0;top:425px;width:1645px;height:1px;background:#c8c8c8;"></div>
<div class="a" style="left:0;top:426px;width:1645px;height:3px;background:#fff;"></div>
<div class="a" style="left:1px;top:429px;width:1644px;height:2px;background:#a6a6a6;"></div>
<div class="a" style="left:3px;top:431px;width:1642px;height:26px;background:#d9d9d9;"></div>
<div class="a" style="left:0;top:425px;width:1px;height:128px;background:#000;"></div>
<div class="a" style="left:1px;top:429px;width:1px;height:124px;background:#a6a6a6;"></div>
<div class="a" style="left:5px;top:456px;width:1640px;height:97px;background:#f0f0f0;border-left:1px solid #8c8c8c;border-top:1px solid #707070;"></div>
<div class="a" style="left:5px;top:435px;width:49px;height:22px;background:#f0f0f0;border:1px solid #707070;"></div>
<div class="a s" style="left:5px;top:441px;width:48px;text-align:center;line-height:13px;font-size:11px;letter-spacing:-0.14px;">General</div>
<div class="a" style="left:53px;top:435px;width:42px;height:22px;background:#f0f0f0;border:1px solid #707070;"></div>
<div class="a s" style="left:53px;top:441px;width:41px;text-align:center;line-height:13px;font-size:11px;letter-spacing:-0.158px;">Status</div>
<div class="a" style="left:94px;top:435px;width:64px;height:23px;background:#f0f0f0;border:1px solid #707070;border-bottom:none;border-right:2px solid #606060;"></div>
<div class="a s" style="left:94px;top:441px;width:63px;text-align:center;line-height:13px;font-size:11px;letter-spacing:-0.06px;">Resources</div>
<div class="a" style="left:157px;top:435px;width:79px;height:22px;background:#f0f0f0;border:1px solid #707070;"></div>
<div class="a s" style="left:157px;top:441px;width:78px;text-align:center;line-height:13px;font-size:11px;letter-spacing:-0.015px;">Predecessors</div>
<div class="a" style="left:235px;top:435px;width:71px;height:22px;background:#f0f0f0;border:1px solid #707070;"></div>
<div class="a s" style="left:235px;top:441px;width:70px;text-align:center;line-height:13px;font-size:11px;letter-spacing:0.149px;">Successors</div>
<div class="a" style="left:305px;top:435px;width:41px;height:22px;background:#f0f0f0;border:1px solid #707070;"></div>
<div class="a s" style="left:305px;top:441px;width:40px;text-align:center;line-height:13px;font-size:11px;letter-spacing:-0.374px;">Codes</div>
<div class="a" style="left:345px;top:435px;width:56px;height:22px;background:#f0f0f0;border:1px solid #707070;"></div>
<div class="a s" style="left:345px;top:441px;width:55px;text-align:center;line-height:13px;font-size:11px;letter-spacing:-0.356px;">Notebook</div>
<div class="a" style="left:400px;top:435px;width:39px;height:22px;background:#f0f0f0;border:1px solid #707070;"></div>
<div class="a s" style="left:400px;top:441px;width:38px;text-align:center;line-height:13px;font-size:11px;letter-spacing:-0.235px;">Steps</div>
<div class="a" style="left:438px;top:435px;width:58px;height:22px;background:#f0f0f0;border:1px solid #707070;"></div>
<div class="a s" style="left:438px;top:441px;width:57px;text-align:center;line-height:13px;font-size:11px;letter-spacing:-0.188px;">Feedback</div>
<div class="a" style="left:495px;top:435px;width:71px;height:22px;background:#f0f0f0;border:1px solid #707070;"></div>
<div class="a s" style="left:495px;top:441px;width:70px;text-align:center;line-height:13px;font-size:11px;letter-spacing:-0.226px;">WPs &amp; Docs</div>
<div class="a" style="left:565px;top:435px;width:59px;height:22px;background:#f0f0f0;border:1px solid #707070;"></div>
<div class="a s" style="left:565px;top:441px;width:58px;text-align:center;line-height:13px;font-size:11px;letter-spacing:-0.102px;">Expenses</div>
<div class="a" style="left:623px;top:435px;width:56px;height:22px;background:#f0f0f0;border:1px solid #707070;"></div>
<div class="a s" style="left:623px;top:441px;width:55px;text-align:center;line-height:13px;font-size:11px;letter-spacing:-0.41px;">Summary</div>
<div class="a" style="left:678px;top:435px;width:75px;height:22px;background:#f0f0f0;border:1px solid #707070;"></div>
<div class="a s" style="left:678px;top:441px;width:74px;text-align:center;line-height:13px;font-size:11px;letter-spacing:-0.204px;">Relationships</div>
<div class="a" style="left:25px;top:460px;width:54px;height:12px;background:#f0f0f0;border:1px solid #d4d4d4;border-bottom:1px solid #bdbdbd;"></div>
<div class="a" style="left:25px;top:472px;width:54px;height:12px;background:#f0f0f0;border:1px solid #d4d4d4;border-bottom:1px solid #bdbdbd;"></div>
<svg class="a" style="left:46px;top:462px" width="12" height="20"><path d="M2 5.5 L5.5 1.5 L9 5.5 Z" fill="#000"/><path d="M2 14 L5.5 18 L9 14 Z" fill="#000"/></svg>
<div class="a s" style="left:172px;top:465px;line-height:13px;font-size:11px;letter-spacing:0.137px;">Activity</div>
<div class="a" style="left:215px;top:462px;width:221px;height:20px;background:#fff;border:1px solid #a0a0a0;border-top:2px solid #808080;border-left:2px solid #808080;border-right:1px solid #e0e0e0;border-bottom:1px solid #e0e0e0;"></div>
<div class="a s" style="left:218px;top:466px;line-height:13px;font-size:11px;white-space:nowrap;letter-spacing:-0.053px;">A1060</div>
<div class="a" style="left:450px;top:462px;width:739px;height:20px;background:#fff;border:1px solid #a0a0a0;border-top:2px solid #808080;border-left:2px solid #808080;border-right:1px solid #e0e0e0;border-bottom:1px solid #e0e0e0;"></div>
<div class="a s" style="left:453px;top:466px;line-height:13px;font-size:11px;white-space:nowrap;letter-spacing:-0.278px;">Install Piping &amp; Couplings</div>
<div class="a s" style="left:1306px;top:465px;line-height:13px;font-size:11px;letter-spacing:-0.325px;">Project</div>
<div class="a" style="left:1349px;top:462px;width:294px;height:20px;background:#fff;border:1px solid #a0a0a0;border-top:2px solid #808080;border-left:2px solid #808080;border-right:1px solid #e0e0e0;border-bottom:1px solid #e0e0e0;"></div>
<div class="a s" style="left:1352px;top:466px;line-height:13px;font-size:11px;white-space:nowrap;letter-spacing:-0.884px;">PIPE REPAIRS-1</div>
<div class="a" style="left:12px;top:489px;width:1633px;height:64px;background:#fff;border-left:1px solid #707070;border-top:1px solid #707070;"></div>
<div class="a" style="left:13px;top:490px;width:1632px;height:17px;background:#f0f0f0;"></div>
<div class="a" style="left:13px;top:507px;width:1632px;height:1px;background:#000;"></div>
<div class="a" style="left:13px;top:508px;width:1198px;height:17px;background:#0078d7;"></div>
<div class="a" style="left:144px;top:490px;width:1px;height:17px;background:#000;"></div>
<div class="a" style="left:145px;top:490px;width:1px;height:17px;background:#fff;"></div>
<div class="a" style="left:144px;top:508px;width:1px;height:17px;background:#a9c9e8;"></div>
<div class="a s" style="left:16px;top:492px;line-height:13px;font-size:11px;white-space:nowrap;letter-spacing:-0.363px;">Resource ID Name</div>
<div class="a s w" style="left:35px;top:510px;line-height:13px;font-size:11px;white-space:nowrap;letter-spacing:-0.644px;">LUMPSUM.Lump Sum</div>
<div class="a" style="left:241px;top:490px;width:1px;height:17px;background:#000;"></div>
<div class="a" style="left:242px;top:490px;width:1px;height:17px;background:#fff;"></div>
<div class="a" style="left:241px;top:508px;width:1px;height:17px;background:#a9c9e8;"></div>
<div class="a s" style="left:145px;width:93px;text-align:right;top:492px;line-height:13px;font-size:11px;white-space:nowrap;letter-spacing:-0.284px;">Original Duration</div>
<div class="a s w" style="left:145px;width:93px;text-align:right;top:510px;line-height:13px;font-size:11px;white-space:nowrap;letter-spacing:-0.508px;">4.00d</div>
<div class="a" style="left:355px;top:490px;width:1px;height:17px;background:#000;"></div>
<div class="a" style="left:356px;top:490px;width:1px;height:17px;background:#fff;"></div>
<div class="a" style="left:355px;top:508px;width:1px;height:17px;background:#a9c9e8;"></div>
<div class="a s" style="left:242px;width:110px;text-align:right;top:492px;line-height:13px;font-size:11px;white-space:nowrap;letter-spacing:-0.252px;">Budgeted Units / Time</div>
<div class="a s w" style="left:242px;width:110px;text-align:right;top:510px;line-height:13px;font-size:11px;white-space:nowrap;letter-spacing:-0.251px;">1000.00h/d</div>
<div class="a" style="left:438px;top:490px;width:1px;height:17px;background:#000;"></div>
<div class="a" style="left:439px;top:490px;width:1px;height:17px;background:#fff;"></div>
<div class="a" style="left:438px;top:508px;width:1px;height:17px;background:#a9c9e8;"></div>
<div class="a s" style="left:356px;width:79px;text-align:right;top:492px;line-height:13px;font-size:11px;white-space:nowrap;letter-spacing:-0.24px;">Budgeted Units</div>
<div class="a s w" style="left:356px;width:79px;text-align:right;top:510px;line-height:13px;font-size:11px;white-space:nowrap;letter-spacing:-0.284px;">4000.00h</div>
<div class="a" style="left:523px;top:490px;width:1px;height:17px;background:#000;"></div>
<div class="a" style="left:524px;top:490px;width:1px;height:17px;background:#fff;"></div>
<div class="a" style="left:523px;top:508px;width:1px;height:17px;background:#a9c9e8;"></div>
<div class="a s" style="left:439px;width:81px;text-align:right;top:492px;line-height:13px;font-size:11px;white-space:nowrap;letter-spacing:-0.109px;">Actual Units</div>
<div class="a s w" style="left:439px;width:81px;text-align:right;top:510px;line-height:13px;font-size:11px;white-space:nowrap;letter-spacing:-0.284px;">1200.00h</div>
<div class="a" style="left:609px;top:490px;width:1px;height:17px;background:#000;"></div>
<div class="a" style="left:610px;top:490px;width:1px;height:17px;background:#fff;"></div>
<div class="a" style="left:609px;top:508px;width:1px;height:17px;background:#a9c9e8;"></div>
<div class="a s" style="left:524px;width:82px;text-align:right;top:492px;line-height:13px;font-size:11px;white-space:nowrap;letter-spacing:-0.407px;">Remaining Units</div>
<div class="a s w" style="left:524px;width:82px;text-align:right;top:510px;line-height:13px;font-size:11px;white-space:nowrap;letter-spacing:-0.227px;">2800.00h</div>
<div class="a" style="left:726px;top:490px;width:1px;height:17px;background:#000;"></div>
<div class="a" style="left:727px;top:490px;width:1px;height:17px;background:#fff;"></div>
<div class="a" style="left:726px;top:508px;width:1px;height:17px;background:#a9c9e8;"></div>
<div class="a s" style="left:610px;width:113px;text-align:right;top:492px;line-height:13px;font-size:11px;white-space:nowrap;letter-spacing:-0.257px;">At Completion Units</div>
<div class="a s w" style="left:610px;width:113px;text-align:right;top:510px;line-height:13px;font-size:11px;white-space:nowrap;letter-spacing:-0.284px;">4000.00h</div>
<div class="a" style="left:807px;top:490px;width:1px;height:17px;background:#000;"></div>
<div class="a" style="left:808px;top:490px;width:1px;height:17px;background:#fff;"></div>
<div class="a" style="left:807px;top:508px;width:1px;height:17px;background:#a9c9e8;"></div>
<div class="a s" style="left:727px;width:77px;text-align:right;top:492px;line-height:13px;font-size:11px;white-space:nowrap;letter-spacing:-0.165px;">Budgeted Cost</div>
<div class="a s w" style="left:727px;width:77px;text-align:right;top:510px;line-height:13px;font-size:11px;white-space:nowrap;letter-spacing:-0.205px;">$4,000.00</div>
<div class="a" style="left:874px;top:490px;width:1px;height:17px;background:#000;"></div>
<div class="a" style="left:875px;top:490px;width:1px;height:17px;background:#fff;"></div>
<div class="a" style="left:874px;top:508px;width:1px;height:17px;background:#a9c9e8;"></div>
<div class="a s" style="left:808px;width:63px;text-align:right;top:492px;line-height:13px;font-size:11px;white-space:nowrap;letter-spacing:-0.045px;">Actual Cost</div>
<div class="a s w" style="left:808px;width:63px;text-align:right;top:510px;line-height:13px;font-size:11px;white-space:nowrap;letter-spacing:-0.167px;">$1,200.00</div>
<div class="a" style="left:971px;top:490px;width:1px;height:17px;background:#000;"></div>
<div class="a" style="left:972px;top:490px;width:1px;height:17px;background:#fff;"></div>
<div class="a" style="left:971px;top:508px;width:1px;height:17px;background:#a9c9e8;"></div>
<div class="a s" style="left:875px;width:93px;text-align:right;top:492px;line-height:13px;font-size:11px;white-space:nowrap;letter-spacing:-0.328px;">Remaining Cost</div>
<div class="a s w" style="left:875px;width:93px;text-align:right;top:510px;line-height:13px;font-size:11px;white-space:nowrap;letter-spacing:-0.18px;">$2,800.00</div>
<div class="a" style="left:1072px;top:490px;width:1px;height:17px;background:#000;"></div>
<div class="a" style="left:1073px;top:490px;width:1px;height:17px;background:#fff;"></div>
<div class="a" style="left:1072px;top:508px;width:1px;height:17px;background:#a9c9e8;"></div>
<div class="a s" style="left:972px;width:97px;text-align:right;top:492px;line-height:13px;font-size:11px;white-space:nowrap;letter-spacing:-0.269px;">At Completion Cost</div>
<div class="a s w" style="left:972px;width:97px;text-align:right;top:510px;line-height:13px;font-size:11px;white-space:nowrap;letter-spacing:-0.205px;">$4,000.00</div>
<div class="a" style="left:1210px;top:490px;width:1px;height:17px;background:#000;"></div>
<div class="a" style="left:1211px;top:490px;width:1px;height:17px;background:#fff;"></div>
<div class="a" style="left:1210px;top:508px;width:1px;height:17px;background:#a9c9e8;"></div>
<div class="a s" style="left:1073px;width:136px;text-align:center;top:492px;line-height:13px;font-size:11px;white-space:nowrap;letter-spacing:-0.058px;">Calculate costs from units</div>
<div class="a" style="left:1135px;top:510px;width:13px;height:13px;background:#fff;border-top:2px solid #505050;border-left:2px solid #505050;border-right:1px solid #fff;border-bottom:1px solid #fff;"></div>
<svg class="a" style="left:1135px;top:510px" width="13" height="13"><path d="M3.5 6.2 L5.8 9 L10 4" fill="none" stroke="#000" stroke-width="2"/></svg>
<div class="a" style="left:439px;top:508px;width:84px;height:17px;border:2px solid #f08a24;"></div>
<svg class="a" style="left:13px;top:508px" width="17" height="17" viewBox="0 0 17 17"><path d="M0.3 16.5 C0.5 13 3 12 5.5 11.5 L10.5 11.5 C13 12 15.5 13 15.8 16.5 Z" fill="#1b3d8f"/><path d="M0.5 14.2 L4 13 L5 14.5 L1 15.6Z" fill="#0c1f4d"/><rect x="6.2" y="9.5" width="3.6" height="3" fill="#d7a85e"/><ellipse cx="8" cy="6.8" rx="3.3" ry="4.2" fill="#d8b46e"/><path d="M4.2 6.5 C3.6 1.5 7 0.8 8.5 1.2 C11.5 0.8 12.6 3.5 11.8 6.5 C11.2 4.2 9.5 3.6 8 3.8 C6.4 3.6 4.8 4.4 4.2 6.5Z" fill="#5b4a2c"/><circle cx="6.8" cy="6.4" r="0.5" fill="#6b7a3a"/><circle cx="9.4" cy="6.2" r="0.6" fill="#b04a5a"/><path d="M12.4 11.6 L13.2 13.6 L15.4 13.7 L13.7 15 L14.3 17 L12.4 15.9 L10.5 17 L11.1 15 L9.4 13.7 L11.6 13.6 Z" fill="#f4e71c"/></svg>
<div class="a" style="left:1643px;top:425px;width:2px;height:128px;background:#fff;"></div>
<div class="a" style="left:0;top:551px;width:1645px;height:2px;background:#000;"></div>
<div class="a" style="left:841px;top:203px;width:81px;height:27px;border:3px solid #f0414b;border-radius:7px;box-shadow:2px 4px 5px rgba(0,0,0,0.42), inset 2px 3px 4px rgba(0,0,0,0.3);"></div>
<div class="a" style="left:435px;top:489px;width:91px;height:44px;border:3px solid #f0414b;border-radius:7px;box-shadow:2px 4px 5px rgba(0,0,0,0.42), inset 2px 3px 4px rgba(0,0,0,0.3);"></div>
<div class="a" style="left:805px;top:486px;width:70px;height:47px;border:3px solid #f0414b;border-radius:7px;box-shadow:2px 4px 5px rgba(0,0,0,0.42), inset 2px 3px 4px rgba(0,0,0,0.3);"></div>
</body></html>
